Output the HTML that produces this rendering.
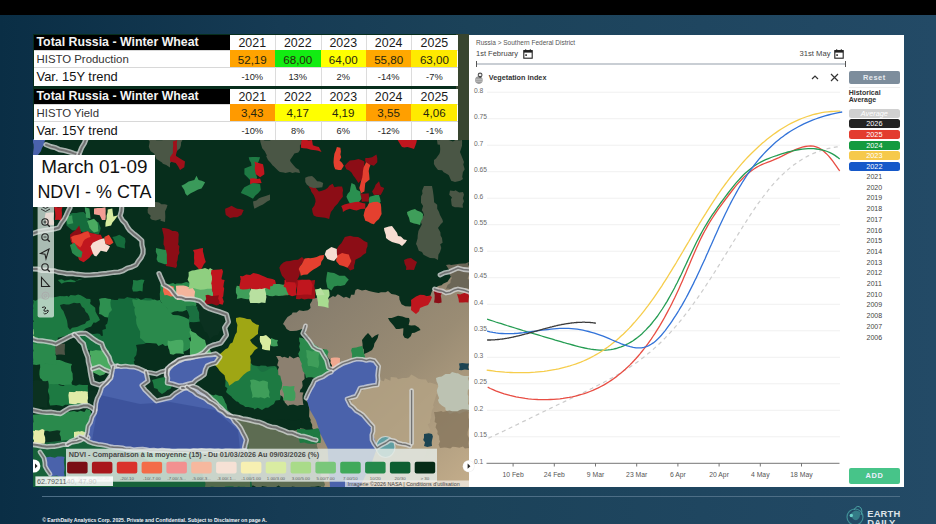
<!DOCTYPE html>
<html><head><meta charset="utf-8"><style>
html,body{margin:0;padding:0}
body{width:936px;height:524px;overflow:hidden;position:relative;background:linear-gradient(90deg,#0a2e45 0%,#163b54 30%,#1b4259 50%,#1f4660 75%,#234a66 100%);font-family:'Liberation Sans', sans-serif}
.sm{position:absolute;white-space:nowrap;font-family:'Liberation Sans', sans-serif}
.th{position:absolute;white-space:nowrap;color:#f4f4f4;font:bold 12.35px 'Liberation Sans', sans-serif}
.tl2{position:absolute;white-space:nowrap;color:#333;font:11.4px 'Liberation Sans', sans-serif}
.tl3{position:absolute;white-space:nowrap;color:#111;font:12.9px 'Liberation Sans', sans-serif}
.ty{position:absolute;text-align:center;color:#1a1a1a;font:12.4px 'Liberation Sans', sans-serif}
.tv{position:absolute;text-align:center;color:#26260e;font:11.6px 'Liberation Sans', sans-serif}
.tp{position:absolute;text-align:center;color:#1e1e1e;font:9.3px 'Liberation Sans', sans-serif}
</style></head><body>
<div style="position:absolute;left:0;top:0;width:936px;height:15px;background:#000"></div>
<svg style="position:absolute;left:33px;top:34px" width="436" height="453" viewBox="33 34 436 453">
<defs><linearGradient id="desg" gradientUnits="userSpaceOnUse" x1="300" y1="290" x2="469" y2="480"><stop offset="0" stop-color="#847b6c"/><stop offset="0.5" stop-color="#9a8c74"/><stop offset="1" stop-color="#c2ac8a"/></linearGradient></defs>
<rect x="33" y="34" width="436" height="453" fill="#072e1c"/>
<polygon points="55.9,297.2 58.3,297.6 62.6,296.2 65.2,296.4 68.6,296.8 70.6,295.0 75.2,295.6 78.1,294.5 80.7,295.3 83.8,297.0 86.5,298.7 90.3,299.1 90.7,301.2 88.5,305.3 90.0,308.0 88.2,311.1 88.3,314.4 84.2,315.1 81.9,316.9 78.8,318.2 78.7,321.0 79.2,324.8 79.8,327.2 80.7,331.5 78.2,331.6 74.6,330.9 72.2,332.2 67.2,331.2 65.2,331.9 61.6,331.5 60.0,328.8 57.2,326.8 54.0,323.9 54.1,320.7 55.7,317.9 55.4,314.1 55.9,310.5 55.0,306.7 56.5,303.7 55.2,300.6" fill="#1d7a42"/>
<polygon points="33.0,322.0 36.9,323.4 38.1,322.2 42.7,324.1 45.3,323.8 48.2,324.9 51.2,324.6 54.0,325.8 54.8,328.9 56.3,333.5 57.8,335.9 57.8,339.2 56.9,341.7 55.2,344.2 55.3,347.8 54.3,351.9 53.8,354.3 52.4,356.2 52.1,360.2 48.6,359.7 45.7,361.8 42.9,360.5 40.1,362.0 36.6,362.6 33.0,362.1 33.5,359.6 32.7,356.9 33.9,352.1 33.5,350.2 32.9,346.7 33.0,344.4 33.0,341.1 32.7,338.2 33.8,334.2 33.1,332.1 33.4,328.1 32.4,324.7" fill="#1d7a42"/>
<polygon points="33.0,328.7 36.3,328.8 40.6,328.7 40.4,333.2 40.6,337.3 37.1,336.4 33.0,337.3 32.0,333.6" fill="#d8eaa0"/>
<polygon points="57.8,280.0 61.6,283.8 64.1,282.5 67.4,282.0 69.8,282.0 74.5,282.2 77.2,280.5 79.7,280.1 82.6,280.0 78.9,279.2 75.8,280.9 74.0,280.6 70.8,279.4 66.7,280.3 64.5,280.7 61.7,279.2" fill="#1d7a42"/>
<polygon points="108.0,299.0 111.4,299.6 114.9,300.1 117.7,299.9 118.6,298.4 124.3,298.8 127.2,297.1 128.9,297.4 132.0,298.0 135.3,298.5 136.8,297.7 140.8,300.1 145.4,298.1 148.6,298.3 151.2,298.6 154.0,300.0 152.5,304.1 153.1,305.1 155.4,310.1 153.4,313.4 154.1,315.5 153.1,319.3 154.6,322.4 155.2,323.4 153.6,326.0 154.0,330.0 151.9,331.9 151.4,336.8 149.5,340.3 150.0,343.0 146.0,342.9 144.0,343.9 138.9,344.4 136.0,345.0 136.5,346.7 137.1,349.6 136.3,355.0 134.0,357.9 134.9,360.2 133.7,361.6 135.0,366.0 131.0,367.4 128.1,366.8 127.3,367.3 122.5,365.6 120.0,366.0 117.1,366.4 112.8,365.9 111.0,364.8 110.7,363.1 107.2,360.6 106.2,356.0 106.5,355.0 105.0,351.0 103.3,349.5 102.6,344.9 100.7,341.8 100.0,340.0 99.9,336.1 102.9,335.8 102.4,330.1 106.0,328.7 105.4,324.9 107.1,323.8 108.0,320.0 107.9,316.8 106.7,315.2 106.6,311.0 109.0,306.9 108.7,306.3 108.4,302.9" fill="#156c3c"/>
<polygon points="132.7,299.0 136.6,300.1 138.7,298.5 140.3,299.8 144.7,300.2 147.5,300.4 150.2,300.6 154.6,299.5 157.1,300.4 160.0,300.0 161.3,302.8 165.3,304.5 167.5,308.4 169.8,309.9 171.0,313.0 172.9,315.1 178.2,315.2 179.3,315.6 184.1,317.0 188.2,319.1 190.0,320.0 189.1,323.6 189.6,327.5 191.2,329.4 190.4,333.0 190.9,337.0 188.6,338.3 190.3,341.2 190.3,343.7 190.0,348.0 187.6,350.1 183.0,352.0 178.9,351.5 176.4,349.1 174.0,347.9 170.1,349.1 168.6,345.5 165.0,346.0 162.8,344.0 158.5,346.0 156.4,343.6 152.6,343.3 150.0,343.0 145.5,342.8 142.0,339.4 140.0,338.0 140.1,334.7 140.1,331.2 139.4,330.2 137.8,327.2 136.5,324.0 136.0,320.0 136.4,317.1 135.0,314.6 134.3,309.8 134.9,307.3 133.6,305.9 132.2,300.6" fill="#2a8a4c"/>
<polygon points="99.0,299.0 101.6,298.3 105.3,298.1 108.1,298.7 111.0,299.0 110.4,302.7 110.7,306.2 112.0,310.0 109.1,312.9 108.0,317.5 104.8,317.0 101.2,314.6 99.0,314.0 99.3,311.9 99.2,307.8 100.0,304.1 99.7,301.6" fill="#2e9050"/>
<polygon points="167.8,340.4 170.3,341.3 173.1,340.8 176.1,339.9 181.0,339.8 183.0,340.4 183.5,343.7 183.4,347.2 183.1,351.3 184.0,354.0 179.7,353.5 176.0,353.5 173.3,354.8 170.0,354.0 169.2,349.8 168.4,348.2 167.5,344.0" fill="#48aa62"/>
<polygon points="160.0,285.0 162.9,284.4 164.9,285.7 167.5,284.4 173.2,282.9 175.2,284.3 176.6,283.4 181.6,283.5 184.7,282.4 186.2,282.0 190.0,283.0 191.7,287.1 193.6,289.5 194.7,292.2 195.5,293.7 198.9,297.8 200.0,300.0 198.1,302.1 196.0,305.8 195.0,310.0 191.3,311.3 188.1,311.9 187.1,309.8 182.6,311.5 178.6,311.6 178.2,311.1 174.3,311.5 171.0,313.0 169.0,311.6 165.7,306.3 163.2,305.3 160.8,301.4 160.0,300.0 160.0,298.3 159.8,293.7 160.4,289.8 160.2,287.0" fill="#2a8a4c"/>
<polygon points="186.0,306.0 189.5,305.9 193.0,305.4 196.8,306.6 199.9,305.3 203.0,306.0 203.0,308.9 202.5,313.3 204.0,314.7 203.7,319.0 203.0,322.0 199.5,321.6 196.8,321.9 193.6,322.3 190.0,322.0 188.5,319.3 189.4,316.5 187.8,311.5 185.8,308.5" fill="#1a7040"/>
<polygon points="190.0,330.0 192.4,331.8 195.8,333.3 197.5,335.2 199.4,336.7 202.8,338.9 205.0,340.0 205.6,342.8 207.0,347.0 209.6,348.7 211.6,353.7 212.0,356.0 209.3,357.2 205.3,357.0 203.1,358.1 200.0,360.0 196.0,357.8 192.4,356.6 190.0,355.0 189.9,352.6 190.0,349.0 190.0,345.9 189.9,342.1 191.0,340.4 190.7,336.7 189.6,332.6" fill="#4aaa60"/>
<polygon points="195.0,296.0 198.3,297.0 202.0,296.6 204.0,297.7 207.9,299.3 212.0,299.5 215.0,300.0 217.3,303.1 218.7,305.5 220.9,309.2 222.9,311.8 226.0,314.0 224.3,317.6 224.1,320.2 224.3,322.6 221.9,327.6 222.0,330.0 219.6,331.2 218.2,334.9 214.0,335.8 211.7,337.6 210.0,340.0 208.6,336.3 207.1,333.1 204.3,331.6 203.1,327.8 201.9,325.0 200.0,322.0 199.1,317.8 199.2,316.4 199.1,312.6 197.2,308.7 197.3,306.1 195.5,302.0 195.4,299.3" fill="#0b3120"/>
<polygon points="40.0,364.0 42.7,363.6 46.8,363.1 49.0,361.1 52.1,360.3 56.0,360.0 59.7,360.1 62.5,361.0 65.2,362.3 69.5,363.4 72.0,364.0 71.0,366.6 71.3,370.7 72.6,373.6 72.7,376.5 72.9,379.6 71.5,382.7 72.0,385.0 68.8,385.5 65.8,384.9 62.2,384.9 59.0,384.2 56.8,385.6 54.0,385.4 50.0,385.5 46.7,385.0 43.7,383.0 42.1,379.7 40.0,378.0 39.4,374.5 39.5,370.9 40.2,367.3" fill="#2a8a4c"/>
<polygon points="33.0,343.7 35.5,344.1 39.9,344.6 42.4,343.2 46.6,344.0 49.0,344.1 52.5,344.3 56.0,343.7 55.2,346.6 56.8,350.3 55.5,354.7 56.3,356.8 56.1,361.3 56.0,364.4 52.0,364.7 48.7,364.1 45.3,363.8 43.8,364.2 40.6,364.3 36.5,365.1 33.0,364.4 33.4,360.2 33.2,357.8 32.4,353.2 33.7,350.6 32.4,347.1" fill="#2a8a4c"/>
<polygon points="46.7,385.0 50.8,384.0 53.5,384.3 57.2,384.0 60.2,385.4 63.3,386.0 65.2,384.7 69.4,384.6 71.6,384.5 76.0,385.7 79.1,384.4 82.5,385.0 84.3,384.9 88.0,385.0 87.8,387.6 88.1,391.6 88.1,396.2 88.3,398.5 88.7,403.2 88.0,405.6 84.8,406.5 80.7,404.9 77.8,406.5 75.7,406.0 71.7,405.6 69.8,404.8 65.1,404.7 62.6,406.3 59.6,405.4 56.3,405.0 54.1,405.3 50.0,405.6 48.9,401.8 49.5,398.4 49.2,395.0 47.7,391.0 48.1,389.0" fill="#1d7a42"/>
<polygon points="33.0,414.7 35.6,414.5 38.8,414.2 41.7,414.6 44.3,414.3 46.5,413.2 50.5,412.5 54.7,412.8 57.9,414.6 60.0,413.0 62.3,413.9 66.9,412.9 67.6,412.0 72.4,411.2 74.2,410.9 77.3,412.1 80.5,410.7 84.4,411.9 86.4,408.9 90.0,410.0 91.4,414.0 90.9,416.1 89.2,418.0 89.4,421.9 88.7,425.6 90.7,426.5 91.0,431.0 91.3,433.9 90.9,436.9 90.0,440.0 87.3,440.4 82.6,439.7 80.2,440.9 77.6,441.7 75.5,441.7 71.5,442.4 70.4,443.6 66.5,444.2 62.2,442.4 60.0,444.0 55.8,442.4 52.5,443.5 52.3,441.5 48.6,443.5 45.8,440.7 42.4,440.6 38.0,439.4 36.1,441.7 33.0,440.0 31.8,435.8 32.7,432.3 32.9,431.2 32.9,426.0 31.6,423.3 33.5,422.3 33.0,416.7" fill="#2a8a4c"/>
<polygon points="78.8,334.6 81.9,335.1 85.8,334.0 88.4,334.8 91.2,333.5 93.0,333.9 97.5,333.6 100.0,334.0 101.4,336.4 103.6,340.4 104.1,343.3 104.9,345.7 107.9,347.1 108.6,350.6 105.9,350.7 103.3,350.0 99.4,351.4 96.5,350.2 92.3,351.5 90.0,350.6 86.6,349.7 82.6,347.5 80.0,345.0 80.2,342.4 78.2,337.8" fill="#156c3c"/>
<polygon points="90.0,350.6 92.5,350.9 95.9,350.0 99.3,350.6 102.4,350.5 105.0,350.1 108.6,350.6 109.2,353.5 109.4,357.6 110.0,361.2 109.0,363.0 110.2,366.9 110.0,370.0 106.1,372.3 104.1,374.5 100.0,375.8 95.4,373.5 92.0,372.0 90.7,369.9 90.9,366.3 91.2,363.0 90.9,360.4 90.8,356.3 89.5,353.6" fill="#4aaa60"/>
<polygon points="56.0,343.7 59.4,344.3 62.0,343.7 65.0,343.7 64.8,348.5 64.6,350.5 65.0,355.0 61.5,354.5 58.7,354.5 56.0,355.0 55.2,350.9 55.6,347.6" fill="#4d5446"/>
<polygon points="33.0,382.7 37.2,383.1 40.4,383.5 42.8,383.0 46.7,382.7 47.5,386.7 46.8,388.6 46.5,393.5 45.9,395.4 47.6,399.0 46.1,402.0 46.7,405.6 44.1,405.3 39.7,405.9 37.0,405.6 33.0,405.6 32.2,402.5 32.1,398.2 32.4,396.2 32.6,392.9 32.3,388.5 32.0,386.4" fill="#0b3120"/>
<polygon points="40.0,430.8 42.7,431.2 47.1,430.8 49.7,431.4 54.3,430.8 57.1,430.3 60.5,430.8 59.5,434.0 60.7,436.8 61.1,440.5 60.5,444.5 56.5,443.6 54.7,445.0 51.0,444.7 45.9,444.2 43.4,443.7 40.0,444.5 40.9,440.8 39.3,438.3 39.2,435.1" fill="#0b3120"/>
<polygon points="74.0,432.0 78.8,431.3 80.8,433.0 85.7,432.0 85.7,437.6 81.2,436.8 78.2,437.3 74.0,437.6" fill="#e0eca8"/>
<polygon points="69.6,391.8 73.5,392.7 76.5,391.0 79.0,391.6 81.9,391.1 84.3,391.7 88.0,391.8 87.4,395.5 87.0,398.6 88.0,403.3 85.4,403.1 81.9,403.8 78.5,402.4 76.3,403.5 73.0,403.5 69.6,403.3 70.5,399.2 70.1,395.4" fill="#e6eca8"/>
<polygon points="33.0,430.8 37.3,431.5 40.0,431.8 44.5,430.8 43.9,434.6 43.7,438.2 43.8,441.5 44.5,444.5 41.1,445.0 36.7,445.2 33.0,444.5 34.0,440.3 33.0,438.6 33.5,434.1" fill="#e8eca8"/>
<polygon points="33.0,300.0 35.6,300.8 40.0,298.3 43.1,299.1 43.6,299.6 47.3,297.2 50.8,297.6 52.9,297.4 58.0,296.5 60.0,296.0 63.9,296.8 67.0,295.8 68.6,297.1 70.8,299.0 75.4,296.8 78.2,298.1 80.1,297.8 83.9,297.9 87.2,299.6 90.0,300.0 90.3,304.0 91.5,304.7 95.2,307.7 95.5,311.6 96.9,314.3 98.6,317.1 100.0,320.0 95.8,322.8 93.6,322.4 91.2,326.5 89.0,327.3 85.6,328.4 83.2,330.7 80.0,333.0 75.7,332.5 72.8,334.8 72.1,335.6 67.2,334.4 66.4,335.7 61.0,337.0 59.4,337.5 56.0,338.0 52.6,337.1 49.4,337.3 46.7,337.0 42.4,338.3 38.4,337.3 36.0,337.2 33.0,336.0 33.6,333.2 33.3,329.2 31.5,327.7 32.3,322.8 33.9,321.3 31.6,318.1 32.0,316.1 32.3,313.3 33.3,307.7 32.7,307.4 33.6,302.0" fill="#1d7a42"/>
<polygon points="60.0,305.0 63.8,304.1 66.1,304.5 69.1,304.6 73.9,302.8 77.0,303.3 80.0,303.0 81.9,306.7 84.3,308.5 85.7,312.1 87.6,313.4 89.2,316.6 90.0,320.0 86.4,321.6 85.0,323.8 81.2,324.9 77.6,326.7 75.3,327.2 72.1,327.7 70.0,330.0 67.8,327.1 67.6,324.4 67.0,320.5 65.7,316.9 64.5,313.9 63.4,311.0 61.1,308.2" fill="#0b3120"/>
<polygon points="133.0,280.0 137.1,280.4 141.5,279.4 144.5,280.0 142.9,284.5 142.8,287.4 142.5,291.5 140.0,290.8 137.0,291.4 133.0,291.5 132.1,288.5 133.1,283.0" fill="#1d7a42"/>
<polygon points="163.5,285.7 166.3,285.3 170.7,285.7 174.0,286.7 173.3,289.8 173.9,292.5 174.0,296.2 170.6,296.6 166.9,295.0 164.5,295.3 163.2,291.6 163.0,289.9" fill="#f06a4c"/>
<polygon points="175.9,285.7 179.4,285.6 183.3,285.6 186.0,285.9 189.1,287.3 191.8,286.4 196.0,286.7 195.4,289.5 197.0,292.5 196.2,295.8 196.0,299.1 193.3,299.1 189.0,299.3 186.3,300.1 183.4,299.1 180.4,299.5 176.9,300.0 176.7,295.9 176.2,293.5 176.2,289.8" fill="#f4b59c"/>
<polygon points="192.2,280.0 195.7,279.6 198.2,280.3 202.1,279.5 205.9,280.3 210.6,279.9 213.2,280.0 214.1,284.3 212.6,285.7 212.5,290.5 213.4,293.9 214.1,296.7 213.2,298.8 213.2,302.9 208.8,303.1 206.6,302.7 203.0,302.1 199.7,302.2 196.0,301.0 194.7,298.0 194.5,295.7 195.1,291.5 193.0,288.5 192.9,286.5 192.5,283.5" fill="#5ab06a"/>
<polygon points="211.2,280.0 213.6,279.2 217.7,280.4 220.5,279.2 224.6,280.0 223.8,283.6 223.4,286.7 224.2,288.6 223.7,292.3 223.2,296.5 222.4,297.6 223.8,301.5 222.7,304.8 218.9,303.8 216.1,304.4 213.2,302.9 212.3,299.1 212.8,296.5 213.2,293.8 211.8,289.2 212.5,287.5 210.6,283.7" fill="#c0161e"/>
<polygon points="205.5,295.3 208.0,294.7 211.8,296.1 215.5,295.7 218.9,295.3 218.1,298.5 219.6,301.7 218.9,304.8 216.4,305.6 211.9,303.8 209.4,304.1 205.5,304.8 204.5,302.1 206.2,299.1" fill="#8c0d16"/>
<polygon points="240.6,280.0 244.6,280.3 248.9,279.6 252.1,280.0 252.1,285.7 248.6,286.5 245.3,285.1 240.6,285.7" fill="#c0161e"/>
<polygon points="261.6,280.0 265.0,280.2 269.0,280.8 272.4,279.7 275.0,280.0 275.9,283.7 275.0,287.6 271.3,286.8 268.3,286.9 264.5,287.9 261.6,287.6 262.2,284.3" fill="#c0161e"/>
<polygon points="236.8,285.7 240.3,286.2 244.0,286.5 246.4,286.7 250.2,285.7 250.3,289.6 250.7,293.3 249.7,295.5 250.2,299.1 247.3,299.3 244.0,298.8 241.1,298.1 236.8,299.1 237.3,295.5 235.9,292.8 235.9,288.5" fill="#3f9e5a"/>
<polygon points="257.8,283.8 260.5,284.8 264.8,284.7 267.5,284.6 269.0,284.1 272.6,284.3 276.0,283.9 279.3,284.0 282.9,284.8 285.0,284.4 288.3,283.8 289.1,287.4 287.6,291.4 288.3,295.3 285.8,295.3 281.6,295.7 278.8,296.0 275.5,295.5 272.8,296.2 269.3,296.0 266.8,295.0 263.3,295.3 261.7,296.3 257.8,295.3 258.7,291.7 257.3,287.6" fill="#3f9e5a"/>
<polygon points="250.2,280.0 253.6,279.2 256.5,280.7 260.0,280.0 262.7,279.7 265.4,280.0 265.5,282.5 265.8,286.7 265.0,289.6 265.9,293.0 266.4,297.3 266.1,298.8 265.4,302.9 261.5,302.5 259.1,303.3 256.9,303.0 253.5,303.0 250.2,302.9 249.2,299.7 249.6,296.2 249.2,293.4 251.0,289.0 250.3,285.6 249.9,282.6" fill="#b8e0a0"/>
<polygon points="284.5,280.0 288.6,279.9 292.6,279.1 296.0,280.0 296.4,282.8 296.2,285.4 295.7,288.7 295.6,292.7 296.0,295.3 292.1,296.2 288.5,294.7 284.5,295.3 284.8,292.3 283.8,289.2 283.6,285.9 284.6,283.4" fill="#c8141e"/>
<polygon points="296.0,280.0 298.6,279.8 301.7,279.8 305.6,280.3 308.2,279.7 311.2,280.6 315.1,280.0 314.6,283.9 314.2,285.4 314.9,289.4 315.6,293.5 315.1,295.5 315.1,299.1 312.3,299.0 308.2,298.7 304.5,299.5 301.4,298.5 299.4,299.3 296.0,299.1 296.2,296.2 296.6,293.6 296.9,289.3 295.7,285.6 295.8,282.5" fill="#a01018"/>
<polygon points="248.3,365.9 251.5,366.6 254.0,365.4 259.2,366.2 260.9,365.6 265.7,365.8 267.4,366.7 270.9,366.2 275.0,365.9 275.2,369.3 275.9,372.3 275.2,375.7 275.0,380.0 272.6,379.3 268.3,380.7 265.7,379.2 262.4,380.7 257.9,380.5 254.4,379.3 250.9,379.6 248.3,380.0 248.9,376.4 249.2,373.7 247.7,369.3" fill="#1a7040"/>
<polygon points="226.0,356.0 228.8,355.9 231.3,358.6 235.7,358.6 238.8,358.3 242.5,359.6 245.0,360.0 248.7,362.5 251.7,363.8 252.5,364.9 257.0,367.0 259.6,370.4 262.0,372.0 263.5,371.7 266.2,370.7 271.4,367.5 273.9,367.9 276.0,366.0 277.1,369.0 279.4,372.2 283.3,374.9 285.0,376.0 283.0,378.5 284.1,382.3 282.2,386.2 283.5,387.4 280.8,391.5 281.0,394.5 280.6,396.7 280.0,400.0 275.6,400.6 273.9,404.0 270.8,405.7 268.1,407.8 265.5,407.8 262.0,410.0 257.8,407.8 254.3,409.4 253.7,408.2 248.3,407.1 245.2,406.9 243.6,405.6 240.0,404.0 238.0,401.8 236.4,401.4 232.2,397.8 231.4,396.5 228.1,393.9 226.0,392.0 227.4,388.3 225.1,386.6 225.3,384.2 225.5,381.3 225.6,378.2 226.8,374.7 225.1,370.0 224.6,367.0 226.5,363.7 225.2,362.2 225.0,358.5" fill="#1d7a42"/>
<polygon points="250.0,380.0 253.3,379.4 255.6,380.1 259.5,381.4 262.8,380.5 264.8,380.7 268.0,382.0 267.8,385.2 267.9,387.8 269.5,391.7 269.0,395.0 270.0,398.0 267.6,397.0 264.6,398.4 260.7,397.3 258.9,397.7 254.2,397.2 252.0,398.0 252.4,395.2 251.9,392.5 251.1,389.9 250.4,386.1 251.0,383.2" fill="#3f9e5a"/>
<polygon points="185.0,392.0 187.2,392.7 190.5,392.6 194.6,393.6 197.2,393.3 199.5,393.5 203.2,394.7 206.7,394.8 209.5,394.0 213.5,395.6 215.6,394.5 218.9,395.7 222.0,396.0 224.1,399.4 225.2,402.6 226.6,404.7 227.5,409.7 230.0,412.0 227.3,410.6 224.1,410.0 219.2,409.7 216.8,408.9 213.7,406.2 210.0,406.0 207.2,405.2 204.8,403.0 201.1,402.4 197.3,401.4 195.6,398.4 192.0,398.0 189.8,395.7 186.7,394.2" fill="#2a8a4c"/>
<polygon points="283.0,324.0 285.0,320.6 287.5,317.0 291.6,314.5 292.7,312.6 296.6,312.5 299.2,310.3 303.2,311.0 308.0,310.2 310.6,307.9 309.9,304.2 312.0,301.1 312.6,298.7 314.8,298.6 319.5,296.4 322.9,296.0 324.3,296.7 328.6,298.7 333.0,296.0 335.1,297.1 337.8,294.2 339.5,295.0 343.8,297.7 346.0,296.8 350.0,298.6 351.1,294.8 354.3,294.8 355.5,290.0 357.6,289.0 362.0,290.4 365.7,289.8 369.0,291.0 373.2,292.1 375.7,292.5 378.6,293.0 380.9,292.2 385.7,292.2 388.0,291.0 391.4,293.9 395.8,294.8 399.2,296.3 399.5,299.7 401.5,304.2 405.3,306.3 409.6,306.4 413.0,306.3 417.0,303.3 417.2,300.0 420.6,298.6 423.3,299.0 427.2,296.0 430.0,296.7 431.8,291.5 434.0,289.0 438.2,286.0 441.6,285.3 443.1,283.8 447.5,281.8 449.0,279.5 450.4,277.6 452.3,273.3 454.3,272.9 457.0,270.0 460.4,268.3 464.0,269.4 465.3,269.0 468.3,265.5 472.0,266.0 472.0,270.1 472.3,272.2 472.0,274.4 471.4,277.8 472.1,282.5 470.7,283.4 473.3,287.7 470.7,290.0 472.5,294.5 470.8,297.5 472.8,298.6 472.1,303.3 471.2,306.0 472.2,307.1 471.3,311.1 470.9,315.8 471.3,316.7 472.3,320.6 471.5,323.0 472.0,327.8 470.7,330.8 473.3,333.1 472.9,335.3 473.4,339.4 472.6,341.5 471.2,345.3 472.7,346.2 471.4,350.9 471.1,352.7 471.1,355.4 470.9,359.5 472.0,363.3 471.4,364.8 473.3,369.3 472.5,372.5 471.5,375.3 471.5,378.5 473.0,379.6 472.9,382.9 470.5,385.8 472.2,391.2 473.3,392.1 471.8,397.5 473.2,400.2 471.2,401.5 470.9,404.5 471.7,409.2 472.5,410.3 471.0,414.2 473.2,417.3 472.9,420.9 473.1,423.4 471.6,426.3 472.9,428.8 471.1,433.5 471.9,435.9 471.0,437.2 471.2,441.4 470.6,443.9 473.3,447.4 470.5,451.6 471.4,452.7 472.4,457.2 471.5,460.4 473.1,462.3 472.0,464.3 472.3,468.2 472.5,472.6 471.5,475.4 473.3,476.9 472.9,480.9 473.3,482.7 471.6,486.0 472.0,490.0 468.3,491.2 466.1,489.6 464.4,488.7 458.6,490.8 457.2,491.0 454.0,491.3 450.5,489.2 449.2,490.1 443.6,488.5 440.5,490.7 439.4,488.8 436.9,490.8 433.4,490.2 429.8,490.6 426.7,491.3 424.3,490.5 422.3,491.4 418.1,488.8 415.1,491.3 411.1,489.3 408.3,489.2 406.9,490.1 401.8,490.0 400.6,488.6 396.1,488.5 394.6,489.7 389.5,489.2 387.1,490.2 384.8,489.8 381.5,488.6 378.5,490.4 376.1,490.3 372.0,488.6 370.8,490.6 367.5,491.4 363.4,490.7 360.4,490.3 359.2,489.9 355.3,491.5 352.0,489.2 350.4,490.5 345.5,489.3 341.6,488.8 341.4,490.2 337.8,489.2 335.0,490.6 332.1,490.0 329.3,490.2 323.9,491.2 322.0,490.0 321.0,488.1 321.4,483.5 320.9,480.2 319.2,476.1 318.9,475.6 319.3,469.8 319.1,468.5 319.4,466.2 318.2,463.2 316.8,457.7 317.8,456.1 317.3,453.4 317.3,447.9 316.4,446.7 315.6,442.2 316.0,440.0 315.7,436.9 316.0,435.4 313.3,429.6 312.2,427.8 312.2,424.8 310.5,421.4 310.7,419.8 309.1,416.4 309.2,413.8 309.4,409.1 308.8,406.6 308.4,402.6 306.2,401.1 306.0,398.0 306.8,394.8 309.1,391.4 311.3,388.7 312.2,387.8 311.9,384.6 314.5,380.6 316.4,379.0 319.0,379.0 322.4,376.3 327.2,373.8 327.4,374.0 331.5,372.0 332.3,368.6 335.0,365.9 337.4,363.8 340.0,362.8 338.4,361.7 332.9,361.2 330.7,360.5 328.6,358.2 325.7,354.0 325.1,353.0 324.0,349.0 321.5,349.7 315.5,347.2 312.6,346.8 311.4,344.3 308.0,340.0 308.2,335.9 304.4,334.0 305.7,331.9 303.5,328.5 299.9,329.7 296.6,330.8 292.7,331.1 290.0,331.0 286.6,328.9 284.8,325.8" fill="url(#desg)"/>
<polygon points="350.0,398.0 351.8,396.3 353.8,394.1 356.5,391.1 360.0,389.9 362.9,390.8 364.5,388.7 367.6,387.7 372.8,383.8 375.9,384.1 375.6,381.3 380.0,380.0 383.9,381.3 384.9,378.3 390.4,380.8 390.7,376.9 396.5,377.4 398.1,379.3 402.6,378.1 406.2,378.0 409.1,377.3 411.3,374.6 414.0,376.0 418.5,378.8 419.2,378.7 420.7,379.3 426.0,379.6 428.1,382.9 429.9,382.5 432.6,383.3 438.6,385.3 440.0,386.0 437.2,390.5 438.8,392.3 436.4,394.5 435.1,398.9 433.7,403.2 433.0,405.0 433.9,407.1 431.8,410.5 431.1,415.7 431.5,417.0 430.0,420.0 430.2,423.0 427.7,424.2 430.5,430.5 426.6,432.6 428.9,436.8 425.5,436.8 426.4,441.7 424.7,445.1 426.9,447.2 426.9,450.0 426.3,453.0 424.2,456.1 424.9,461.1 421.9,463.0 424.5,466.4 421.7,468.2 423.8,470.6 423.6,474.4 421.4,478.7 421.6,481.3 421.9,484.5 420.0,487.0 418.6,487.6 414.2,485.2 412.4,485.9 406.6,485.2 405.2,486.5 402.2,488.3 400.3,488.2 396.8,486.5 390.6,488.1 391.3,486.9 387.9,487.3 382.7,488.3 378.4,486.5 377.9,485.3 374.0,487.0 373.3,483.6 371.1,480.8 372.3,478.9 370.9,476.4 369.3,472.6 367.1,470.0 368.5,466.9 368.2,465.4 367.0,462.5 365.9,456.7 365.8,455.4 364.0,450.3 362.9,448.2 362.1,447.6 360.4,441.0 360.0,440.0 357.8,437.2 359.9,432.2 357.5,430.4 356.9,428.5 356.4,424.1 357.2,423.2 356.6,417.5 354.4,414.9 352.0,414.7 353.5,409.8 353.2,408.4 351.3,402.4 352.3,401.0" fill="#b5a486" opacity="0.75"/>
<polygon points="276.0,356.0 280.2,355.9 282.3,357.6 284.2,356.8 288.3,358.3 289.6,356.0 293.5,358.5 298.0,356.7 300.0,358.0 302.7,361.1 304.3,365.3 303.1,368.4 305.8,370.0 305.1,372.0 304.4,374.7 304.6,379.1 302.1,381.2 302.7,385.8 302.0,388.0 300.3,389.8 299.6,392.7 298.5,398.1 298.0,400.0 293.7,401.4 292.2,403.1 288.0,406.0 284.8,402.5 284.3,401.1 282.5,396.4 280.0,395.0 280.0,390.8 281.5,388.6 282.0,386.0 282.2,383.2 281.0,379.0 280.3,375.7 278.4,375.1 278.0,369.5 279.0,367.1 277.2,365.2 278.5,360.6 277.0,357.6" fill="#8c8070"/>
<polygon points="289.7,392.5 292.9,392.4 296.5,392.2 300.1,392.3 303.5,392.5 302.6,395.5 302.5,398.0 303.0,402.8 303.5,405.0 300.0,405.1 297.4,405.8 293.3,404.5 289.7,405.0 289.7,401.6 290.6,397.8 289.4,396.0" fill="#8c8070"/>
<polygon points="299.0,337.6 302.3,338.0 306.0,340.0 309.9,341.1 312.6,342.5 315.0,345.0 319.1,347.5 319.3,348.2 322.3,349.2 326.9,349.6 328.6,352.0 327.7,353.8 327.1,358.1 327.4,360.1 328.9,363.6 327.7,366.8 329.2,369.7 328.5,374.7 328.0,376.5 325.1,376.1 320.6,377.4 317.6,376.8 316.4,378.2 311.6,377.2 308.5,377.2 306.0,378.0 305.0,373.8 302.8,370.9 302.5,369.1 301.5,365.8 301.8,363.8 300.0,360.0 299.6,358.0 298.2,353.8 300.1,350.1 299.2,346.5 300.1,343.1 299.3,341.4" fill="#2a8a4c"/>
<polygon points="306.0,350.0 308.6,350.3 312.2,351.5 316.5,350.6 320.0,352.0 318.7,355.7 318.5,358.9 319.1,361.6 319.1,365.0 318.0,368.0 314.8,367.1 310.8,365.9 308.0,366.0 307.4,362.6 307.7,359.1 306.6,357.3 306.6,353.5" fill="#3f9e5a"/>
<polygon points="331.0,358.0 334.0,357.5 337.3,357.5 340.0,358.0 339.9,362.8 339.2,365.4 340.0,369.7 337.4,368.9 333.3,370.4 331.0,369.7 332.0,365.4 330.4,362.8" fill="#f0a890"/>
<polygon points="283.0,386.0 286.3,386.0 290.0,386.6 294.5,386.0 294.0,389.8 295.4,393.1 295.4,397.4 294.5,400.6 290.8,400.9 287.0,400.3 283.0,400.6 284.0,396.8 284.0,394.0 282.1,389.2" fill="#3f9e5a"/>
<polygon points="315.0,289.6 319.4,288.7 322.3,289.6 326.1,289.4 328.6,289.6 329.4,292.0 329.6,295.6 328.0,298.5 328.9,300.9 328.4,304.0 328.6,308.0 324.2,306.7 321.0,306.2 318.0,306.0 318.0,302.6 317.5,300.2 317.0,297.1 315.8,293.2" fill="#a8dc90"/>
<polygon points="388.0,318.0 391.6,318.0 394.6,317.0 398.0,315.8 402.5,316.6 405.8,317.7 409.0,318.0 409.7,320.7 408.3,326.3 409.0,329.0 406.2,328.5 403.0,328.3 399.0,328.9 396.0,329.0 393.5,325.5 392.0,323.8 389.6,321.1" fill="#072e1c"/>
<polygon points="403.4,326.0 408.1,325.0 411.2,325.5 415.0,325.3 418.7,327.4 420.6,330.0 417.6,331.2 414.6,332.8 412.0,333.0 410.8,336.3 408.0,338.7 404.6,337.8 403.0,335.0 403.2,332.2 403.4,329.0" fill="#072e1c"/>
<polygon points="362.0,340.0 363.2,338.6 365.3,335.8 368.0,333.0 370.7,336.0 372.0,338.0 374.9,335.7 378.6,334.0 377.7,338.1 376.3,340.5 374.4,343.4 373.8,346.7 372.0,350.0 368.1,352.3 364.0,354.0 363.8,349.6 362.5,347.4 362.6,344.2" fill="#072e1c"/>
<polygon points="352.0,348.0 356.3,347.5 358.6,346.7 362.0,346.0 363.4,349.9 363.5,351.4 364.2,354.0 365.3,357.8 362.3,358.8 358.1,358.3 354.7,358.7 352.0,357.8 352.1,354.3 351.1,350.6" fill="#2a8a4c"/>
<polygon points="411.0,300.0 413.1,298.4 416.0,296.6 420.0,294.8 424.0,294.9 426.9,296.2 429.8,295.5 432.0,297.0 430.5,301.0 428.0,305.0 424.2,306.3 420.0,308.0 419.0,311.3 416.0,314.0 414.0,312.4 411.0,310.0 411.1,307.3 411.2,303.5" fill="#c0161e"/>
<polygon points="434.0,289.0 438.0,288.4 441.6,289.0 441.9,293.2 440.7,295.6 441.3,298.6 441.6,302.4 438.6,303.3 434.0,302.4 434.6,298.9 434.7,294.9 434.0,292.3" fill="#8c0d16"/>
<polygon points="457.0,294.0 460.2,294.5 465.4,292.4 468.3,293.0 469.0,296.6 468.7,298.3 468.3,302.4 465.9,302.2 462.7,302.5 459.0,302.4 458.5,298.7" fill="#b0141a"/>
<polygon points="436.0,378.0 438.6,377.0 441.7,376.5 445.5,373.9 450.0,374.1 452.0,372.0 456.5,373.3 457.9,373.3 461.4,375.3 464.1,376.1 469.0,376.0 468.0,378.4 469.4,382.5 469.0,385.2 469.3,388.3 467.8,390.4 467.6,394.2 468.4,396.2 468.3,401.3 467.9,404.2 470.2,405.1 470.0,408.1 469.0,412.0 466.3,411.2 462.1,412.6 459.1,414.0 456.8,411.9 453.3,412.4 450.0,414.0 447.0,411.3 445.4,409.5 445.4,407.8 442.1,405.7 439.0,403.0 438.0,400.0 439.1,398.2 437.5,394.0 436.8,390.4 438.3,386.3 437.6,383.5 436.5,381.3" fill="#bcc2b2"/>
<polygon points="434.0,412.0 437.2,412.0 441.3,411.1 443.0,412.0 446.7,410.9 449.6,410.6 452.1,411.3 457.5,411.3 459.9,410.1 462.4,409.3 466.5,409.6 469.0,410.0 468.4,414.6 468.5,417.8 469.4,420.3 469.4,421.7 469.6,425.1 468.7,427.9 467.7,431.8 467.5,435.0 470.1,440.0 468.8,440.5 468.5,443.5 469.0,448.0 464.9,448.4 462.9,446.6 459.3,447.8 455.8,446.9 452.6,446.8 450.2,448.4 446.8,447.7 444.6,447.6 440.0,448.0 438.6,444.6 440.2,441.0 439.3,440.3 439.1,435.9 437.4,434.1 437.6,430.9 435.5,427.3 436.7,423.2 434.6,422.0 435.2,417.7 434.5,414.3" fill="#86765c" opacity="0.8"/>
<polygon points="424.0,434.0 428.9,433.3 432.0,434.0 432.9,436.5 431.9,440.8 431.7,443.0 432.0,446.0 427.3,446.9 424.0,446.0 425.0,442.3 423.2,439.9 424.0,437.6" fill="#1c4452"/>
<polygon points="459.0,363.5 462.2,363.1 466.5,363.5 469.0,363.5 468.2,367.2 469.0,370.0 464.8,369.4 461.5,370.3 459.0,370.0 459.7,367.0" fill="#1c4452"/>
<polygon points="224.0,412.0 226.9,413.2 229.7,415.0 231.6,416.0 236.6,416.3 239.9,415.4 243.0,417.6 245.0,418.0 246.8,420.1 250.5,420.7 252.3,421.5 254.8,420.7 258.0,421.6 262.0,424.0 265.4,423.5 267.4,425.6 272.3,424.7 273.8,426.1 278.0,425.2 280.4,425.6 284.1,425.4 285.8,426.6 289.6,425.7 293.0,427.9 297.8,426.3 300.0,428.0 304.1,428.8 307.5,432.0 309.0,432.6 313.0,432.8 316.0,435.0 317.9,438.5 318.3,440.1 316.7,445.4 317.3,446.9 317.7,451.3 318.2,452.2 318.1,457.7 318.4,458.5 319.7,462.7 321.7,467.0 321.1,469.2 321.1,471.8 320.7,475.5 322.7,478.3 324.1,481.9 325.0,484.6 324.0,487.0 319.8,486.5 318.3,485.9 314.6,486.7 310.7,486.8 309.3,488.3 306.2,487.3 301.7,488.5 300.5,487.6 296.6,487.2 292.3,486.4 289.1,488.5 287.1,487.5 285.2,486.9 282.9,488.4 278.4,485.6 276.2,487.0 270.9,487.7 269.6,488.4 266.5,486.7 262.0,486.0 260.9,488.0 256.7,487.2 253.2,485.5 250.2,485.9 248.0,487.0 248.9,482.7 247.0,480.6 249.0,477.1 247.1,475.5 247.5,472.9 247.6,467.9 248.6,465.8 247.3,463.4 246.8,458.4 246.4,455.5 248.0,454.1 246.1,448.7 247.0,447.0 244.3,442.8 243.7,441.1 242.1,437.9 240.4,437.0 237.5,435.0 235.7,432.3 236.1,429.4 232.6,426.4 232.4,422.3 230.1,419.6 226.8,418.6 226.4,415.5" fill="#5d6c52"/>
<polygon points="264.0,420.0 267.0,419.6 271.0,419.9 273.5,420.1 276.2,420.3 280.5,419.1 283.0,419.5 286.3,420.2 288.2,419.2 292.3,420.7 296.0,420.6 297.8,419.7 301.7,420.0 301.3,423.1 300.0,427.5 300.0,430.0 297.3,429.8 294.0,430.4 291.5,430.6 287.7,430.9 285.5,429.5 281.3,429.9 278.5,430.8 276.0,430.0 272.6,428.6 270.5,426.6 268.7,423.3 267.4,421.8" fill="#072e1c"/>
<polygon points="297.0,429.0 299.5,428.9 303.2,428.9 306.6,429.7 310.5,429.5 314.6,429.0 317.1,428.3 320.5,429.0 321.1,431.6 320.2,435.3 321.0,439.4 320.5,443.0 317.1,443.1 314.4,444.0 310.0,443.8 307.3,443.4 304.4,442.4 300.0,443.0 298.9,439.5 298.1,435.6 297.1,433.3" fill="#1d7a42"/>
<polygon points="456.0,34.0 469.0,34.0 469.0,140.0 456.0,140.0" fill="#38452f"/>
<polygon points="33.0,139.0 36.7,139.9 40.0,139.8 42.0,139.2 46.0,139.0 44.5,141.5 44.1,144.7 42.0,148.0 40.9,151.2 38.0,155.0 33.0,155.0 33.1,152.3 33.6,147.7 33.5,144.6 32.7,141.4" fill="#4a62ab"/>
<polygon points="147.5,139.0 151.3,137.7 152.9,139.3 156.6,140.3 161.3,140.2 163.4,140.1 167.1,140.1 169.5,139.2 173.1,138.7 176.2,138.7 178.6,137.9 183.0,139.0 181.1,142.4 181.0,145.3 180.0,148.3 178.0,150.0 175.4,152.6 175.7,154.5 175.2,159.5 172.3,160.3 170.0,163.2 170.0,167.6 166.2,164.9 162.9,163.7 162.0,162.5 158.0,160.0 156.4,158.9 154.1,153.5 150.7,151.3 150.0,150.0 148.8,146.8 149.7,141.6" fill="#4a5645"/>
<polygon points="147.5,202.0 152.1,201.8 154.0,201.8 159.1,202.4 161.4,204.3 164.9,204.2 167.5,205.0 166.6,208.1 165.1,211.2 165.3,216.1 165.3,217.3 165.0,222.0 160.5,220.7 160.6,218.9 155.8,220.5 151.8,219.8 150.0,218.0 150.7,215.8 147.8,213.0 147.6,209.4 149.0,205.3" fill="#4a5645"/>
<polygon points="260.0,139.0 262.5,139.4 264.6,140.5 270.2,140.6 271.5,138.0 273.9,138.0 276.9,139.6 281.1,140.0 285.4,138.5 286.6,138.5 289.2,139.5 292.8,137.9 298.1,138.8 301.4,140.5 303.0,139.0 302.5,141.9 299.9,145.5 300.0,150.0 298.3,152.5 294.4,153.5 292.0,157.2 290.0,160.0 290.6,161.8 293.3,164.9 296.0,168.0 299.1,169.7 300.0,173.0 295.4,172.2 292.4,172.9 289.9,171.9 285.4,173.1 283.7,172.6 280.0,172.0 278.2,170.7 273.7,166.2 272.7,165.4 270.4,162.4 268.0,160.0 266.2,156.2 266.9,155.5 264.6,150.9 262.2,148.3 261.4,145.4 260.4,141.9" fill="#4a5645"/>
<polygon points="437.0,140.0 438.8,140.3 444.8,139.5 446.5,139.6 450.3,140.6 452.9,141.5 456.4,139.5 458.5,140.4 462.0,140.0 462.1,142.1 462.0,145.8 461.4,147.7 460.0,152.0 460.7,153.8 462.4,157.9 464.0,162.0 463.3,164.5 464.7,169.2 462.9,172.2 462.2,177.0 463.0,179.0 460.3,180.7 455.0,182.0 451.2,180.8 448.8,175.2 447.0,174.0 443.7,172.3 442.1,170.2 438.0,170.0 435.3,166.5 433.9,163.9 434.0,160.0 436.0,158.5 439.4,153.8 440.0,152.0 440.2,149.0 439.9,144.7 437.6,144.5" fill="#4a5645"/>
<polygon points="424.0,186.0 427.4,186.0 432.0,186.0 432.7,189.4 433.2,193.0 433.6,195.7 434.0,200.0 434.1,202.3 437.2,204.7 437.2,208.8 438.9,211.8 440.0,215.0 442.5,219.7 443.0,222.0 440.7,224.2 438.0,228.0 440.4,232.3 440.6,235.5 442.0,238.0 442.6,242.8 440.2,244.2 441.3,247.9 440.0,252.0 438.4,254.7 438.0,260.0 434.7,258.3 430.0,258.0 426.4,256.3 423.5,254.8 422.0,252.0 418.8,250.7 417.0,245.7 416.0,244.0 416.7,241.5 417.6,238.2 417.7,235.4 418.4,230.9 420.0,228.0 421.8,224.4 420.8,222.1 421.9,218.0 424.0,215.0 423.0,212.0 421.8,210.2 423.1,206.1 421.0,202.7 421.0,200.0 421.1,196.2 422.5,193.7 422.1,190.7" fill="#4a5645"/>
<polygon points="450.0,190.5 454.1,190.9 455.6,190.3 459.3,192.5 463.0,192.0 464.0,194.8 462.9,198.2 464.0,201.3 462.6,204.6 463.0,207.7 458.1,207.2 454.8,207.3 452.0,206.0 451.5,204.0 451.0,199.2 452.0,197.6 449.2,194.8" fill="#4a5645"/>
<polygon points="446.0,265.0 449.1,264.4 451.2,264.9 456.4,264.2 459.1,263.8 463.6,263.4 465.3,263.6 469.0,262.0 468.5,263.8 468.3,268.0 470.1,270.5 469.5,273.3 467.6,278.4 469.2,279.9 469.5,281.9 470.1,285.4 469.0,289.0 467.1,288.0 462.3,288.4 459.5,287.7 454.5,288.5 451.2,289.9 448.1,288.4 446.0,289.0 447.6,285.1 450.4,282.9 450.7,279.9 452.0,278.0 449.7,275.1 449.6,272.4 448.9,269.5" fill="#6b6656"/>
<polygon points="54.0,206.0 57.9,207.4 62.4,207.0 61.7,210.1 62.0,213.5 61.7,218.2 62.0,221.0 58.5,219.7 55.0,220.0 55.4,216.0 55.1,212.1 54.6,209.7" fill="#c0161e"/>
<polygon points="45.6,213.0 50.4,212.5 54.0,212.6 53.5,216.3 53.2,218.8 54.1,222.1 54.0,225.0 49.3,224.8 46.0,224.0 45.9,221.0 44.8,217.6" fill="#f39d94"/>
<polygon points="66.5,216.5 69.7,214.3 72.2,213.0 76.5,212.9 79.5,212.2 83.6,211.9 87.1,215.3 87.7,217.8 89.4,221.0 92.6,221.7 95.1,222.0 98.5,222.2 99.5,225.1 100.8,227.9 100.1,231.0 98.5,234.8 95.1,233.9 93.0,233.1 89.4,232.5 86.7,231.7 83.6,232.2 80.2,231.3 76.0,230.4 72.2,230.2 68.8,227.5 66.5,225.6 66.2,222.7 66.9,219.2" fill="#156c3c"/>
<polygon points="65.3,217.6 68.4,216.3 72.2,215.3 72.4,219.1 73.3,223.3 67.6,224.5 66.6,220.7" fill="#3a9a5a"/>
<polygon points="87.1,221.0 90.3,219.9 94.0,218.7 97.4,222.2 98.0,225.7 98.0,228.3 98.5,231.3 94.0,232.5 91.5,230.3 89.4,227.9 88.6,225.0" fill="#4aaa60"/>
<polygon points="84.8,207.3 89.4,208.4 89.8,211.8 90.2,215.2 90.5,218.7 85.9,217.6 85.9,213.8 85.1,211.0" fill="#3a9a5a"/>
<polygon points="94.0,208.4 97.4,208.0 101.6,208.1 105.4,207.3 105.7,210.7 105.6,213.2 105.8,216.7 105.4,219.9 102.0,219.9 99.7,215.3 94.0,214.2" fill="#f39d94"/>
<polygon points="107.7,209.6 112.3,208.4 112.8,212.8 113.4,216.5 118.0,215.3 114.6,219.9 112.4,222.6 111.1,225.6 105.4,226.8 105.5,222.9 106.6,218.7 106.6,215.5 107.6,212.2" fill="#d8eca0"/>
<polygon points="112.3,237.1 115.9,236.3 119.2,234.8 121.6,236.0 125.0,238.2 125.5,241.5 124.7,245.1 125.0,248.5 121.0,247.6 116.9,246.2 115.4,243.2 114.1,239.9" fill="#156c3c"/>
<polygon points="69.9,237.1 73.5,235.5 77.9,233.6 80.5,233.4 83.7,232.1 87.1,231.3 90.8,233.0 94.0,233.6 97.5,234.4 100.8,234.8 103.1,239.4 100.3,242.1 97.4,244.0 95.9,247.2 95.2,250.0 94.0,253.1 91.6,254.8 89.4,257.7 86.6,259.9 83.6,262.3 79.1,260.0 78.1,256.9 77.3,254.1 75.6,250.8 74.1,247.1 72.2,244.0 70.9,241.0" fill="#c0161e"/>
<polygon points="69.9,234.8 73.0,232.0 75.6,230.2 79.1,225.6 80.5,229.4 81.3,233.6 79.7,236.3 79.1,239.9 77.9,242.8 74.8,242.0 71.0,240.5" fill="#8c0d16"/>
<polygon points="71.0,237.1 74.1,235.6 77.9,234.8 81.7,233.7 84.6,232.3 88.2,231.3 89.4,234.0 90.5,237.1 87.9,237.8 84.8,239.4 83.1,241.8 82.0,245.1 80.2,247.4 75.6,244.0 72.2,241.7" fill="#e4402f"/>
<polygon points="104.3,237.1 108.8,234.8 110.3,237.1 112.3,240.3 113.4,242.8 110.0,245.1 105.4,244.0 104.9,240.7" fill="#e4402f"/>
<polygon points="92.8,242.8 95.8,241.2 99.7,239.4 104.3,238.2 105.4,244.0 110.0,246.2 108.8,248.7 106.6,252.0 100.8,250.8 98.9,253.3 96.2,256.6 94.0,255.4 92.7,252.7 91.5,249.5 90.5,246.2" fill="#f6ddd2"/>
<polygon points="69.9,245.1 74.5,242.8 75.9,245.3 77.9,248.5 82.5,252.0 81.3,257.7 76.8,256.6 72.2,253.1 71.2,249.2" fill="#2a8a4c"/>
<polygon points="162.0,228.0 164.4,228.1 168.8,228.9 172.5,231.1 175.3,231.1 178.0,232.0 178.8,234.5 178.5,237.7 178.5,241.9 178.1,244.5 179.4,246.2 179.0,250.0 179.5,252.9 178.1,255.6 177.6,259.9 176.7,262.5 177.1,265.7 176.0,268.0 173.0,267.2 169.0,266.4 166.0,266.0 165.5,263.6 166.3,259.0 164.9,255.5 166.1,252.3 165.0,250.0 164.4,246.2 163.5,244.6 163.6,240.8 163.9,237.5 163.5,234.8 162.6,231.3" fill="#8c0d16"/>
<polygon points="156.0,248.0 159.2,248.8 162.8,249.5 166.0,250.0 166.9,254.4 166.8,257.6 166.9,260.4 167.0,264.0 164.7,264.3 161.1,262.9 158.0,262.0 156.6,259.2 157.3,255.3 155.8,251.7" fill="#2a8a4c"/>
<polygon points="193.0,250.0 197.2,249.3 199.8,248.4 203.0,248.0 202.9,251.2 203.7,254.2 204.4,257.6 205.8,262.0 204.0,264.1 202.2,267.5 200.0,270.7 197.8,267.7 194.0,264.0 194.3,260.8 194.0,257.9 194.2,252.8" fill="#c0161e"/>
<polygon points="188.6,272.0 192.0,270.4 194.7,270.3 197.5,269.6 202.6,268.7 205.0,268.0 208.7,269.4 210.0,268.0 213.9,270.4 217.0,270.0 216.7,273.8 217.0,275.4 216.4,279.8 215.7,281.9 216.5,285.4 216.0,289.0 213.3,288.6 209.1,288.7 207.4,288.7 203.9,289.5 200.3,289.7 196.8,288.9 194.2,288.3 192.4,288.3 188.6,289.0 189.2,285.5 189.5,283.0 187.6,279.7 188.7,275.9" fill="#8fcf80"/>
<polygon points="211.5,270.0 215.5,269.7 219.5,269.4 222.0,269.0 223.0,271.6 222.3,274.9 221.5,278.2 222.2,281.7 223.0,285.7 223.0,289.0 218.7,289.3 215.4,289.5 212.0,289.0 211.7,285.1 211.2,283.6 212.0,279.7 211.9,276.4 210.9,273.6" fill="#c0161e"/>
<polygon points="240.0,276.0 242.9,276.3 246.2,274.5 250.2,275.1 253.2,273.1 256.0,273.6 258.9,274.3 261.7,275.4 264.8,276.8 267.4,278.0 272.4,278.9 274.5,280.0 273.3,283.4 272.5,286.8 272.0,289.0 269.6,289.6 265.6,288.1 261.5,288.9 259.9,288.7 257.0,289.2 252.0,289.1 250.6,288.6 247.1,289.3 242.7,289.6 240.0,289.0 239.4,285.6 240.5,281.6 240.7,279.0" fill="#c0161e"/>
<polygon points="172.9,141.4 177.2,140.0 176.8,143.6 177.0,147.0 177.2,150.0 175.7,155.7 180.0,158.6 185.0,161.5 184.3,167.2 180.0,170.0 178.2,166.5 175.7,162.9 170.0,161.5 170.0,157.2 172.9,152.9 172.9,148.6 173.2,145.6" fill="#a0101a"/>
<polygon points="181.4,185.8 184.9,184.0 188.6,181.5 194.3,180.1 196.5,175.8 198.6,180.1 201.7,180.7 205.1,182.2 203.2,185.7 201.5,188.6 198.1,189.6 194.3,191.5 190.7,193.3 187.2,195.8 185.3,193.4 184.3,190.1" fill="#3a9a5a"/>
<polygon points="248.7,157.2 252.4,156.9 256.0,156.9 260.1,157.2 259.0,160.5 257.3,164.3 256.4,168.8 255.8,172.9 257.3,178.6 253.7,179.8 250.1,180.1 247.2,177.1 244.4,174.3 244.4,168.6 248.1,166.9 251.5,165.8 251.0,162.8 249.5,160.2" fill="#1e7a44"/>
<polygon points="254.4,161.5 256.9,162.4 260.4,163.6 263.0,164.3 263.7,167.6 264.2,171.0 264.4,174.3 260.1,177.2 255.8,174.3 255.1,171.1 254.7,168.3 255.2,164.5" fill="#c0161e"/>
<polygon points="250.1,178.6 253.5,178.3 257.3,179.1 260.1,178.6 261.6,182.9 257.7,183.6 253.6,183.6 250.1,184.3" fill="#c0161e"/>
<polygon points="244.4,187.2 246.9,185.9 249.8,184.6 253.0,182.9 256.7,183.5 260.1,184.3 260.8,190.1 258.3,193.0 255.1,195.8 253.0,198.7 250.2,197.2 247.3,195.8 244.4,194.6 240.8,192.9 242.5,189.8" fill="#1e7a44"/>
<polygon points="225.1,208.7 228.8,207.2 231.5,205.8 234.6,207.5 237.2,208.7 240.2,209.0 243.7,210.1 241.5,215.0 237.2,217.3 233.8,217.2 230.1,218.0 225.8,215.0 225.3,212.2" fill="#8c0d16"/>
<polygon points="253.0,201.5 256.4,200.5 259.0,198.3 261.6,197.2 265.6,196.1 270.0,194.4 270.0,200.1 267.1,201.4 263.0,204.4 260.1,205.8 256.8,207.4 254.4,208.7 253.5,205.3" fill="#4a5645"/>
<polygon points="301.7,140.0 305.6,139.8 308.9,140.5 312.0,140.0 312.9,145.2 315.7,146.3 318.9,146.9 321.5,152.0 318.3,150.8 315.5,150.3 311.0,149.7 306.9,148.6 303.4,148.3 300.9,147.7 301.1,143.5" fill="#c0161e"/>
<polygon points="336.9,146.9 340.4,147.7 340.9,151.4 340.4,154.6 341.2,157.2 339.5,160.6 342.0,162.7 343.8,165.8 341.2,170.1 338.6,170.0 335.2,169.2 334.0,166.3 333.5,162.3 333.8,158.0 334.4,153.7 335.8,150.5" fill="#e4402f"/>
<polygon points="344.7,165.8 346.9,163.3 349.8,160.6 354.7,159.9 358.4,158.9 361.4,160.0 364.4,161.5 364.3,165.2 365.3,167.5 365.3,170.9 364.2,174.0 363.5,176.4 361.8,179.5 358.4,182.9 356.5,180.0 355.0,177.8 353.4,175.7 351.5,172.6 349.2,170.5 346.4,169.2" fill="#8c0d16"/>
<polygon points="365.3,158.0 368.3,158.0 372.1,157.2 376.4,154.6 377.3,158.3 377.3,162.3 373.9,165.8 369.7,164.5 366.1,164.0 365.2,160.7" fill="#8c0d16"/>
<polygon points="366.1,162.3 370.4,164.9 369.3,167.9 368.7,170.9 369.2,174.7 369.6,179.5 365.3,182.9 364.8,187.8 364.4,191.5 361.0,193.2 359.3,188.1 360.2,184.7 361.0,181.2 362.2,177.7 362.7,174.4 362.9,171.3 363.6,167.5" fill="#e4402f"/>
<polygon points="372.1,191.5 374.4,188.0 375.6,184.7 379.0,181.2 380.7,186.4 384.2,188.1 382.8,191.2 380.7,195.0 377.3,194.7 373.9,195.0" fill="#8c0d16"/>
<polygon points="351.5,182.9 355.0,184.7 356.7,189.8 360.1,191.5 361.4,194.6 361.8,198.4 358.4,202.7 354.6,203.1 349.8,203.6 348.0,200.3 346.4,196.7 347.7,193.7 349.8,191.5 350.6,186.9" fill="#2a9050"/>
<polygon points="308.6,186.4 313.7,184.7 316.3,188.4 318.9,191.5 321.9,190.7 325.3,189.6 327.5,188.1 329.5,185.5 332.6,183.8 334.4,187.2 338.1,186.6 342.1,186.4 343.1,190.2 342.6,193.0 342.9,196.7 339.9,200.3 337.8,203.6 334.4,207.0 333.3,209.0 330.9,212.1 330.0,215.3 329.2,219.0 325.1,217.8 320.6,217.3 316.5,216.7 313.7,215.6 312.6,212.4 312.0,208.7 314.4,205.4 315.5,201.8 315.3,198.9 313.7,195.0 311.3,191.7 310.6,189.2" fill="#8c0d16"/>
<polygon points="360.1,193.2 363.8,193.7 368.7,193.2 369.0,197.0 368.7,201.8 365.3,201.5 361.8,201.8 361.4,198.0" fill="#8c0d16"/>
<polygon points="341.2,206.1 344.3,204.4 348.1,203.6 351.7,202.7 355.1,202.0 358.4,201.8 362.4,202.9 365.3,203.6 365.3,208.7 360.7,209.0 356.7,210.4 353.7,210.0 349.8,208.7 346.2,210.0 342.9,212.1 342.7,209.6" fill="#b5141c"/>
<polygon points="369.6,196.7 373.2,195.7 375.4,195.1 379.0,195.0 380.2,198.8 380.7,201.8 378.7,204.2 375.6,206.1 372.3,206.4 368.7,206.1 369.0,203.0 368.8,199.3" fill="#2a9050"/>
<polygon points="365.3,208.7 367.4,206.2 368.7,203.6 373.3,202.1 377.3,201.8 380.7,203.6 381.2,207.3 381.3,210.4 381.6,213.9 379.0,219.0 376.1,221.5 373.9,224.2 371.1,223.5 368.2,221.8 365.3,220.7 363.6,215.6 364.2,212.5" fill="#e4402f"/>
<polygon points="305.2,177.8 308.2,176.4 312.0,176.1 314.4,178.1 317.2,181.2 320.0,181.5 323.2,182.9 322.3,187.2 318.1,187.8 313.7,188.1 310.1,186.9 306.9,184.7 305.3,182.0" fill="#4a5645"/>
<polygon points="407.0,212.0 411.4,209.9 415.0,209.0 416.9,210.4 420.9,211.9 423.0,214.0 422.8,217.9 421.0,221.5 420.0,225.0 416.8,224.0 414.0,223.4 410.0,222.0 409.0,217.7 407.4,214.6" fill="#3f9e5a"/>
<polygon points="384.0,228.0 388.9,226.4 392.0,226.0 394.6,229.4 397.0,232.8 398.0,236.0 400.9,236.5 403.9,239.6 407.0,240.0 405.5,242.5 402.0,246.0 399.3,244.1 395.5,243.1 392.0,242.0 388.5,239.9 386.0,238.0 385.8,235.0 384.3,230.6" fill="#f6ddd2"/>
<polygon points="336.8,249.0 338.8,245.7 341.3,243.2 342.9,240.5 344.8,237.0 350.1,235.7 353.6,236.7 358.1,237.0 360.9,238.5 364.1,240.9 367.5,242.4 367.5,246.2 366.4,249.0 366.1,253.0 363.2,254.7 360.8,257.0 355.4,259.7 355.0,262.8 354.1,265.6 354.1,269.1 350.1,270.4 347.9,268.0 344.8,265.1 341.6,263.7 339.4,261.4 336.8,259.7 337.1,256.4 336.7,252.5" fill="#8c0d16"/>
<polygon points="336.8,255.7 342.1,253.0 345.0,253.8 348.8,254.4 350.0,258.1 351.4,261.0 349.6,264.4 347.4,267.7 343.9,266.2 339.4,265.1 336.1,261.0" fill="#e4402f"/>
<polygon points="326.1,250.4 328.8,248.8 331.4,247.0 336.8,249.0 336.9,253.4 337.4,257.0 334.1,261.0 330.9,260.3 327.4,259.0 324.7,254.4" fill="#f6ddd2"/>
<polygon points="280.7,265.1 283.4,262.4 286.2,261.2 290.0,261.0 293.9,259.9 298.0,259.7 302.0,257.0 304.7,259.7 303.2,261.8 300.7,265.1 300.3,268.4 300.2,271.8 299.4,275.7 296.7,281.1 295.8,284.2 295.4,287.8 291.1,287.8 287.4,289.1 286.6,284.6 286.0,281.1 284.1,277.9 282.0,275.7 280.5,271.7 279.3,267.7" fill="#8c0d16"/>
<polygon points="304.7,258.4 308.3,258.1 310.3,258.3 313.6,257.7 316.7,257.0 319.8,255.6 324.1,255.0 323.5,258.8 321.3,261.7 320.7,265.1 316.7,267.7 313.5,269.6 310.0,272.0 307.4,274.4 303.6,274.7 300.7,275.7 300.1,272.2 298.7,269.1 300.1,266.3 302.0,263.7" fill="#e4402f"/>
<polygon points="284.7,282.4 288.7,282.1 292.2,282.2 295.4,282.4 296.0,285.4 296.2,288.8 295.8,292.1 296.7,295.0 293.0,295.0 290.4,295.1 287.0,294.7 283.4,295.0 283.7,291.4 284.0,288.3 284.9,285.3" fill="#c0161e"/>
<polygon points="298.0,281.1 302.0,279.7 306.1,279.8 310.1,279.7 312.7,285.1 312.2,288.5 311.8,291.6 311.4,295.0 307.3,294.5 304.2,294.5 300.6,295.0 296.7,295.0 296.9,291.8 297.2,287.9 298.1,284.5" fill="#c0161e"/>
<polygon points="327.4,271.7 330.2,272.5 334.1,273.1 339.4,275.7 344.8,275.7 348.8,279.7 346.8,281.9 344.8,285.1 340.6,286.1 337.5,285.7 334.1,286.4 331.4,290.4 327.4,287.8 326.9,284.9 326.1,281.1 326.3,278.5 326.7,275.4" fill="#2a8a4c"/>
<polygon points="270.0,286.4 274.5,285.4 278.0,285.1 282.0,286.0 286.0,287.8 286.8,290.9 288.7,295.0 285.7,294.7 282.7,295.2 279.4,294.4 275.8,294.7 273.0,295.5 270.0,295.0 270.3,290.6" fill="#3f9e5a"/>
<polygon points="316.7,290.4 320.7,287.8 322.8,291.6 324.7,295.0 320.2,295.3 316.1,295.0" fill="#b8e0a0"/>
<polygon points="404.0,260.0 407.5,258.5 411.0,258.0 414.5,260.6 417.0,262.0 415.8,265.0 414.0,270.0 409.5,269.7 406.0,270.0 406.3,267.0 404.7,263.7" fill="#8c0d16"/>
<polygon points="397.0,139.0 400.0,139.5 402.8,138.6 406.8,139.8 410.0,139.2 412.9,138.3 417.0,139.0 416.4,142.4 415.4,145.6 414.0,149.0 411.0,147.9 407.4,147.1 404.3,147.4 402.0,147.0 400.5,144.8 399.0,142.3" fill="#c0161e"/>
<polygon points="33.0,444.0 84.0,438.0 118.8,444.6 137.6,440.0 158.7,436.4 177.5,440.0 201.0,441.0 224.5,444.6 248.0,443.4 252.0,487.0 33.0,487.0" fill="#17623a"/>
<polygon points="135.0,451.0 138.0,450.9 141.5,451.5 143.7,450.9 147.2,451.2 150.9,451.2 153.7,451.0 155.5,450.1 158.0,450.5 161.3,450.0 164.3,449.4 168.5,450.0 171.3,451.1 173.6,450.3 176.3,449.4 180.4,449.2 183.0,450.0 187.0,451.0 189.8,453.9 191.1,454.3 195.0,456.0 192.0,456.7 188.5,458.2 185.9,459.1 183.2,460.9 180.0,462.0 177.1,461.1 174.8,461.8 170.8,461.4 167.6,462.2 164.9,462.9 161.9,461.7 159.7,462.6 156.9,462.7 153.1,462.7 150.0,462.0 146.8,459.4 144.0,458.7 143.1,455.9 140.5,454.2 138.2,452.2" fill="#2f9a52"/>
<polygon points="200.0,446.0 203.0,445.4 207.0,446.8 209.5,446.7 211.1,446.5 214.2,445.8 218.0,445.5 221.1,445.9 223.1,445.6 227.0,446.6 230.5,445.6 233.8,446.5 236.4,445.5 239.7,446.8 241.8,446.4 245.8,446.8 248.0,446.0 248.5,449.5 247.6,453.0 248.9,455.5 249.3,459.3 249.7,462.2 248.9,465.1 248.2,467.9 248.7,470.5 248.6,475.0 248.7,477.2 249.9,480.3 250.1,483.4 250.0,487.0 247.4,487.3 244.6,486.8 240.4,486.7 238.6,486.2 235.8,487.6 232.7,486.3 229.4,486.2 225.4,486.4 223.9,487.6 220.0,487.0 217.2,487.5 213.7,486.8 211.9,486.5 207.0,487.7 205.0,487.0 205.5,483.7 204.6,479.9 202.9,476.5 202.6,474.2 202.1,471.6 202.6,467.5 202.8,464.9 202.4,460.8 201.6,459.3 201.3,455.9 199.9,451.8 200.9,449.2" fill="#536a4c"/>
<polygon points="117.6,366.0 134.0,367.0 150.0,374.0 165.0,372.0 172.0,378.0 182.0,388.0 193.0,386.5 206.0,394.0 217.8,405.5 229.0,415.0 240.7,428.4 246.4,440.0 247.0,452.0 126.0,452.0 93.6,443.4 85.9,436.0 85.9,431.7 90.6,417.6 95.3,401.1 100.0,391.7 107.0,380.0 111.7,372.9" fill="#4a62ab"/>
<polygon points="100.0,395.0 140.0,404.0 170.0,402.0 215.0,410.0 238.0,430.0 240.0,450.0 130.0,450.0 92.0,440.0" fill="#3a5098" opacity="0.8"/>
<polygon points="146.0,372.0 148.6,372.5 154.0,372.8 156.5,374.0 159.1,373.5 163.0,371.7 166.0,371.2 168.0,369.4 169.4,371.5 170.5,375.2 172.0,378.0 172.5,380.1 175.0,384.0 179.5,384.0 182.9,384.9 186.3,387.0 189.3,387.0 187.1,388.8 182.7,388.4 179.9,390.5 176.6,392.0 173.3,395.3 170.5,397.6 166.4,398.6 164.3,399.4 160.0,400.6 156.4,401.0 152.8,399.1 151.0,396.0 147.2,393.0 145.0,390.0 141.8,385.4 145.5,382.2 148.0,381.0 147.8,378.7 146.2,375.8" fill="#0b3120"/>
<polygon points="152.0,380.0 154.9,379.2 159.4,377.9 163.2,377.2 166.0,377.0 167.3,379.9 169.7,383.4 172.0,386.0 170.4,388.9 167.4,390.0 165.3,392.1 162.0,394.0 158.6,391.4 157.4,389.0 154.0,388.0 153.3,383.7" fill="#1d7a42"/>
<polygon points="167.2,368.7 178.6,360.0 201.5,355.8 215.8,353.8 220.0,357.0 215.8,362.8 207.2,365.8 204.4,374.4 193.0,383.0 178.6,385.9 167.2,383.0" fill="#4a62ab"/>
<polygon points="306.0,398.0 314.5,380.6 331.5,372.0 343.0,363.4 357.0,359.0 374.4,360.6 378.7,366.3 377.3,385.0 360.0,388.0 355.8,396.4 347.0,399.0 350.0,405.0 363.0,415.0 370.0,420.0 373.0,434.0 377.0,448.0 372.0,462.0 360.0,487.0 330.0,487.0 327.6,448.0 320.5,434.0 315.8,420.0 310.0,410.0" fill="#4a62ab"/>
<ellipse cx="385.5" cy="447" rx="9.5" ry="10.5" fill="#5f9ea2" stroke="#c8d0cc" stroke-width="1.2"/>
<polygon points="236.0,318.0 239.7,317.2 244.0,317.9 247.0,319.0 250.5,319.3 252.4,322.1 256.4,324.5 259.0,325.0 258.5,327.4 258.0,331.6 258.0,334.0 256.1,335.2 253.2,337.7 250.0,340.0 252.0,343.3 254.7,345.4 258.0,348.0 254.8,350.1 251.9,354.2 250.0,356.0 250.8,360.3 250.6,363.4 250.4,367.3 250.4,370.6 247.1,372.0 243.6,374.8 241.0,377.6 238.4,380.5 235.0,381.5 231.8,383.9 229.2,385.8 228.1,382.4 225.5,379.6 224.5,375.3 221.3,372.6 219.1,370.2 218.5,368.9 215.7,365.8 214.0,364.0 216.3,361.1 216.9,357.8 220.0,354.0 222.6,351.8 225.4,349.2 228.0,348.0 230.1,343.8 232.5,342.4 234.0,338.0 235.3,334.4 236.8,332.3 237.0,328.0 237.4,325.0 236.0,320.9" fill="#9fa614"/>
<polygon points="260.0,336.0 263.2,335.9 266.0,335.0 268.8,337.5 271.6,340.0 270.8,344.2 270.1,346.2 270.0,350.5 265.3,349.9 262.0,349.0 262.2,345.8 260.1,342.0 259.7,338.9" fill="#d8eca0"/>
<polygon points="271.0,338.0 275.3,339.7 278.0,340.0 277.1,342.5 278.0,346.0 274.0,346.5 271.0,346.0 271.0,342.1" fill="#3f9e5a"/>
<polygon points="69.0,392.0 72.1,391.9 76.2,392.4 79.1,391.2 81.5,392.2 84.8,391.3 88.0,392.0 87.8,395.8 88.9,400.5 88.0,403.6 84.3,404.1 81.2,403.4 77.7,403.3 75.6,404.0 72.4,404.1 69.0,403.6 68.9,400.2 68.4,395.2" fill="#e0eca8"/>
<polygon points="35.0,430.0 38.9,430.6 42.2,429.0 44.5,430.0 43.5,433.1 45.1,437.2 45.3,441.1 44.5,443.7 41.3,443.7 37.4,444.4 35.0,443.7 34.1,439.9 34.9,437.1 34.6,433.2" fill="#e8eca8"/>
<polygon points="75.0,432.0 77.4,432.2 81.9,431.1 84.5,432.0 84.6,435.8 84.5,438.0 81.0,437.1 79.1,437.8 75.0,438.0 75.6,435.4" fill="#d8e8a0"/>
<polygon points="33.0,380.7 36.2,380.0 39.9,380.6 41.9,381.0 45.5,381.3 48.0,380.7 48.7,383.7 48.7,387.8 47.9,389.9 47.8,393.7 47.7,397.7 47.4,400.2 47.1,404.6 48.0,407.4 45.6,408.2 42.0,407.0 38.5,407.9 35.4,408.1 33.0,407.4 33.5,403.9 33.5,400.8 32.5,397.2 32.4,393.2 32.3,390.9 32.1,387.5 33.6,384.9" fill="#0b3120"/>
<polygon points="88.0,390.0 91.8,390.3 96.0,390.0 96.9,392.5 96.4,397.8 95.6,399.4 96.0,403.6 92.0,402.8 88.0,403.6 87.5,400.8 88.3,397.2 87.8,393.2" fill="#0b3120"/>
<polygon points="44.0,458.0 46.6,457.3 50.1,456.8 54.9,457.7 57.5,456.5 61.8,456.5 64.6,457.0 63.9,459.9 63.9,463.1 64.5,467.5 64.4,469.9 63.9,472.4 64.6,476.0 60.7,476.9 56.7,475.4 53.4,476.0 50.0,476.0 48.1,472.7 46.3,470.4 44.0,468.0 44.2,464.5 43.6,460.7" fill="#4a62ab"/>
<polyline points="40.0,452.0 44.0,458.0 44.9,462.5 45.0,466.0 47.1,469.8 50.0,474.0" fill="none" stroke="#d6d8d8" stroke-width="4.800000000000001" stroke-linejoin="round" stroke-linecap="round" opacity="0.8"/><polyline points="40.0,452.0 44.0,458.0 44.9,462.5 45.0,466.0 47.1,469.8 50.0,474.0" fill="none" stroke="#727272" stroke-width="1.6" stroke-linejoin="round" stroke-linecap="round"/>
<polyline points="46.0,144.7 50.9,146.6 55.8,147.8 59.5,149.6 64.5,150.5 69.8,152.0 74.0,153.4 78.8,154.7" fill="none" stroke="#d6d8d8" stroke-width="5.2" stroke-linejoin="round" stroke-linecap="round" opacity="0.8"/><polyline points="46.0,144.7 50.9,146.6 55.8,147.8 59.5,149.6 64.5,150.5 69.8,152.0 74.0,153.4 78.8,154.7" fill="none" stroke="#727272" stroke-width="2.0" stroke-linejoin="round" stroke-linecap="round"/>
<polyline points="86.0,139.0 84.4,143.2 81.7,147.6 78.8,154.7" fill="none" stroke="#d6d8d8" stroke-width="5.2" stroke-linejoin="round" stroke-linecap="round" opacity="0.8"/><polyline points="86.0,139.0 84.4,143.2 81.7,147.6 78.8,154.7" fill="none" stroke="#727272" stroke-width="2.0" stroke-linejoin="round" stroke-linecap="round"/>
<polyline points="121.7,207.7 121.4,211.3 120.0,216.0 122.2,220.1 125.5,223.4 127.6,227.4 130.0,230.6 134.5,234.4 138.2,237.3 141.8,240.6 142.0,245.1 143.1,249.5 143.0,253.5 141.1,257.7 138.2,261.4 136.0,265.0 131.8,266.9 127.2,268.2 123.0,270.7 118.9,272.0 114.5,272.3 111.2,272.8 106.7,273.4 102.0,273.8 98.4,274.3 94.1,274.7 90.0,275.0 85.0,275.1 80.4,274.5 76.5,274.2 72.2,273.4 67.0,273.6 63.0,272.8 58.4,272.1 54.7,270.9 50.0,270.7 45.7,270.2 41.2,270.3 37.5,269.1 33.0,269.0" fill="none" stroke="#d6d8d8" stroke-width="5.2" stroke-linejoin="round" stroke-linecap="round" opacity="0.8"/><polyline points="121.7,207.7 121.4,211.3 120.0,216.0 122.2,220.1 125.5,223.4 127.6,227.4 130.0,230.6 134.5,234.4 138.2,237.3 141.8,240.6 142.0,245.1 143.1,249.5 143.0,253.5 141.1,257.7 138.2,261.4 136.0,265.0 131.8,266.9 127.2,268.2 123.0,270.7 118.9,272.0 114.5,272.3 111.2,272.8 106.7,273.4 102.0,273.8 98.4,274.3 94.1,274.7 90.0,275.0 85.0,275.1 80.4,274.5 76.5,274.2 72.2,273.4 67.0,273.6 63.0,272.8 58.4,272.1 54.7,270.9 50.0,270.7 45.7,270.2 41.2,270.3 37.5,269.1 33.0,269.0" fill="none" stroke="#727272" stroke-width="2.0" stroke-linejoin="round" stroke-linecap="round"/>
<polyline points="70.0,207.7 67.8,212.0 66.2,215.6 64.5,219.0 61.6,222.8 58.8,227.7 54.0,229.0 49.2,229.8 44.5,230.6 38.8,231.5 33.0,233.5" fill="none" stroke="#d6d8d8" stroke-width="5.2" stroke-linejoin="round" stroke-linecap="round" opacity="0.8"/><polyline points="70.0,207.7 67.8,212.0 66.2,215.6 64.5,219.0 61.6,222.8 58.8,227.7 54.0,229.0 49.2,229.8 44.5,230.6 38.8,231.5 33.0,233.5" fill="none" stroke="#727272" stroke-width="2.0" stroke-linejoin="round" stroke-linecap="round"/>
<polyline points="159.0,273.6 160.6,277.4 162.5,281.6 163.5,284.8 167.6,287.0 171.0,289.5 174.0,293.6 177.0,297.0 181.4,297.4 185.3,298.9 190.0,299.0 194.4,299.4 199.8,301.0 202.7,303.5 205.5,306.7 209.9,308.8 215.0,310.5 219.2,311.8 223.2,313.2 226.5,314.4 228.4,322.0 224.6,327.7 226.5,335.0 223.5,339.3 220.8,343.0 216.5,344.3 213.1,345.1 209.0,346.8 203.6,352.5 199.7,354.8 196.0,356.3 190.3,357.8 184.5,358.2 180.4,360.3 176.8,361.5 173.0,364.0 167.4,369.7 166.4,375.4" fill="none" stroke="#d6d8d8" stroke-width="5.2" stroke-linejoin="round" stroke-linecap="round" opacity="0.8"/><polyline points="159.0,273.6 160.6,277.4 162.5,281.6 163.5,284.8 167.6,287.0 171.0,289.5 174.0,293.6 177.0,297.0 181.4,297.4 185.3,298.9 190.0,299.0 194.4,299.4 199.8,301.0 202.7,303.5 205.5,306.7 209.9,308.8 215.0,310.5 219.2,311.8 223.2,313.2 226.5,314.4 228.4,322.0 224.6,327.7 226.5,335.0 223.5,339.3 220.8,343.0 216.5,344.3 213.1,345.1 209.0,346.8 203.6,352.5 199.7,354.8 196.0,356.3 190.3,357.8 184.5,358.2 180.4,360.3 176.8,361.5 173.0,364.0 167.4,369.7 166.4,375.4" fill="none" stroke="#727272" stroke-width="2.0" stroke-linejoin="round" stroke-linecap="round"/>
<polyline points="33.0,339.2 37.6,340.6 41.9,340.8 46.4,341.5 51.8,342.4 55.9,343.7 59.6,341.7 63.7,339.6 66.4,338.2 70.0,336.3 74.2,334.6 80.3,333.4 85.7,333.4 89.8,336.2 93.2,338.9 97.2,341.5 101.7,343.7 103.6,348.8 106.3,352.9 109.1,357.2 110.3,361.5 113.1,366.6 117.6,366.0" fill="none" stroke="#d6d8d8" stroke-width="5.2" stroke-linejoin="round" stroke-linecap="round" opacity="0.8"/><polyline points="33.0,339.2 37.6,340.6 41.9,340.8 46.4,341.5 51.8,342.4 55.9,343.7 59.6,341.7 63.7,339.6 66.4,338.2 70.0,336.3 74.2,334.6 80.3,333.4 85.7,333.4 89.8,336.2 93.2,338.9 97.2,341.5 101.7,343.7 103.6,348.8 106.3,352.9 109.1,357.2 110.3,361.5 113.1,366.6 117.6,366.0" fill="none" stroke="#727272" stroke-width="2.0" stroke-linejoin="round" stroke-linecap="round"/>
<polyline points="74.2,334.6 77.4,337.3 79.8,340.5 83.4,343.7 84.6,348.7 86.0,352.6 88.0,357.5 88.3,361.6 89.7,367.1 90.2,371.2 91.2,376.8 92.5,382.7 99.4,385.0 106.3,382.7 108.4,379.5 110.9,375.8" fill="none" stroke="#d6d8d8" stroke-width="5.2" stroke-linejoin="round" stroke-linecap="round" opacity="0.8"/><polyline points="74.2,334.6 77.4,337.3 79.8,340.5 83.4,343.7 84.6,348.7 86.0,352.6 88.0,357.5 88.3,361.6 89.7,367.1 90.2,371.2 91.2,376.8 92.5,382.7 99.4,385.0 106.3,382.7 108.4,379.5 110.9,375.8" fill="none" stroke="#727272" stroke-width="2.0" stroke-linejoin="round" stroke-linecap="round"/>
<polyline points="92.5,368.9 99.4,366.6 104.2,369.5 108.6,371.2" fill="none" stroke="#d6d8d8" stroke-width="4.800000000000001" stroke-linejoin="round" stroke-linecap="round" opacity="0.8"/><polyline points="92.5,368.9 99.4,366.6 104.2,369.5 108.6,371.2" fill="none" stroke="#727272" stroke-width="1.6" stroke-linejoin="round" stroke-linecap="round"/>
<polyline points="33.0,410.1 37.4,411.1 41.8,412.0 46.7,412.4 51.4,412.2 56.2,413.1 60.5,413.6 64.5,411.0 69.6,407.9 73.9,407.2 78.6,406.9 83.2,405.6 88.0,405.6 91.5,407.5 94.8,410.1" fill="none" stroke="#d6d8d8" stroke-width="5.2" stroke-linejoin="round" stroke-linecap="round" opacity="0.8"/><polyline points="33.0,410.1 37.4,411.1 41.8,412.0 46.7,412.4 51.4,412.2 56.2,413.1 60.5,413.6 64.5,411.0 69.6,407.9 73.9,407.2 78.6,406.9 83.2,405.6 88.0,405.6 91.5,407.5 94.8,410.1" fill="none" stroke="#727272" stroke-width="2.0" stroke-linejoin="round" stroke-linecap="round"/>
<polyline points="33.0,444.5 37.1,445.1 41.7,446.1 46.7,446.8 51.1,446.4 55.0,446.3 59.3,445.4 62.9,444.5 67.3,444.5 70.6,441.7 74.9,439.9 78.8,437.6 83.3,438.0 88.0,437.6" fill="none" stroke="#d6d8d8" stroke-width="5.2" stroke-linejoin="round" stroke-linecap="round" opacity="0.8"/><polyline points="33.0,444.5 37.1,445.1 41.7,446.1 46.7,446.8 51.1,446.4 55.0,446.3 59.3,445.4 62.9,444.5 67.3,444.5 70.6,441.7 74.9,439.9 78.8,437.6 83.3,438.0 88.0,437.6" fill="none" stroke="#727272" stroke-width="2.0" stroke-linejoin="round" stroke-linecap="round"/>
<polyline points="113.1,366.6 112.0,372.4 110.9,378.0 107.5,381.5 104.9,384.1 101.7,387.2 100.5,391.3 99.1,394.9 97.1,398.7 95.8,403.5 95.5,408.0 94.8,412.4 92.0,417.0 90.6,422.1 88.0,426.2 87.2,432.2 85.7,437.6 81.1,439.9 77.0,441.5 71.8,442.4 67.3,444.5" fill="none" stroke="#d6d8d8" stroke-width="4.800000000000001" stroke-linejoin="round" stroke-linecap="round" opacity="0.8"/><polyline points="113.1,366.6 112.0,372.4 110.9,378.0 107.5,381.5 104.9,384.1 101.7,387.2 100.5,391.3 99.1,394.9 97.1,398.7 95.8,403.5 95.5,408.0 94.8,412.4 92.0,417.0 90.6,422.1 88.0,426.2 87.2,432.2 85.7,437.6 81.1,439.9 77.0,441.5 71.8,442.4 67.3,444.5" fill="none" stroke="#727272" stroke-width="1.6" stroke-linejoin="round" stroke-linecap="round"/>
<polyline points="117.6,366.0 121.2,366.7 125.4,366.1 129.9,366.9 134.0,367.0 138.6,368.4 142.0,370.0 146.0,372.0 151.2,372.8 156.5,374.0 160.8,371.9 164.3,371.1 168.0,369.4" fill="none" stroke="#d6d8d8" stroke-width="4.800000000000001" stroke-linejoin="round" stroke-linecap="round" opacity="0.8"/><polyline points="117.6,366.0 121.2,366.7 125.4,366.1 129.9,366.9 134.0,367.0 138.6,368.4 142.0,370.0 146.0,372.0 151.2,372.8 156.5,374.0 160.8,371.9 164.3,371.1 168.0,369.4" fill="none" stroke="#727272" stroke-width="1.6" stroke-linejoin="round" stroke-linecap="round"/>
<polyline points="146.0,372.0 147.0,376.4 148.0,381.0 141.8,385.4 145.0,390.0 148.1,393.0 151.0,396.0 156.4,401.0 161.6,399.6 165.6,398.6 170.5,397.6 174.8,393.7 179.9,390.5 184.1,388.2 189.3,387.0" fill="none" stroke="#d6d8d8" stroke-width="4.9" stroke-linejoin="round" stroke-linecap="round" opacity="0.8"/><polyline points="146.0,372.0 147.0,376.4 148.0,381.0 141.8,385.4 145.0,390.0 148.1,393.0 151.0,396.0 156.4,401.0 161.6,399.6 165.6,398.6 170.5,397.6 174.8,393.7 179.9,390.5 184.1,388.2 189.3,387.0" fill="none" stroke="#727272" stroke-width="1.7" stroke-linejoin="round" stroke-linecap="round"/>
<polyline points="167.2,368.7 170.5,365.6 175.3,362.9 178.6,360.0 183.3,358.7 187.7,357.7 192.8,357.1 197.3,356.4 201.5,355.8 205.8,355.1 211.6,354.7 215.8,353.8 220.0,357.0 215.8,362.8 211.9,363.8 207.2,365.8 205.3,369.9 204.4,374.4 200.9,377.0 196.2,379.9 193.0,383.0 188.7,384.0 183.7,385.5 178.6,385.9 172.8,384.0 167.2,383.0 167.7,378.0 166.8,374.0 167.2,368.7" fill="none" stroke="#d6d8d8" stroke-width="5.0" stroke-linejoin="round" stroke-linecap="round" opacity="0.8"/><polyline points="167.2,368.7 170.5,365.6 175.3,362.9 178.6,360.0 183.3,358.7 187.7,357.7 192.8,357.1 197.3,356.4 201.5,355.8 205.8,355.1 211.6,354.7 215.8,353.8 220.0,357.0 215.8,362.8 211.9,363.8 207.2,365.8 205.3,369.9 204.4,374.4 200.9,377.0 196.2,379.9 193.0,383.0 188.7,384.0 183.7,385.5 178.6,385.9 172.8,384.0 167.2,383.0 167.7,378.0 166.8,374.0 167.2,368.7" fill="none" stroke="#727272" stroke-width="1.8" stroke-linejoin="round" stroke-linecap="round"/>
<polyline points="182.0,388.0 186.9,387.8 193.0,386.5 197.8,388.5 201.3,391.1 206.0,394.0 209.4,397.1 211.7,399.7 215.2,402.3 217.8,405.5 221.7,409.0 224.8,412.2 229.0,415.0 232.5,417.8 234.8,421.7 237.9,424.6 240.7,428.4 242.8,432.7 244.6,435.9 246.4,440.0 244.5,447.5" fill="none" stroke="#d6d8d8" stroke-width="5.2" stroke-linejoin="round" stroke-linecap="round" opacity="0.8"/><polyline points="182.0,388.0 186.9,387.8 193.0,386.5 197.8,388.5 201.3,391.1 206.0,394.0 209.4,397.1 211.7,399.7 215.2,402.3 217.8,405.5 221.7,409.0 224.8,412.2 229.0,415.0 232.5,417.8 234.8,421.7 237.9,424.6 240.7,428.4 242.8,432.7 244.6,435.9 246.4,440.0 244.5,447.5" fill="none" stroke="#727272" stroke-width="2.0" stroke-linejoin="round" stroke-linecap="round"/>
<polyline points="187.0,387.0 190.1,389.5 193.9,391.5 196.9,394.3 201.0,396.4 205.5,398.5 209.2,401.7 212.8,403.5 216.6,406.4 219.4,409.7 223.2,411.7 226.9,415.2 232.3,416.5 238.6,417.6 242.5,418.7 246.7,419.4 251.0,420.4 255.2,421.6 259.8,422.3 264.4,424.2 267.3,425.7 271.6,427.0 276.1,427.5 280.0,429.3 284.4,430.9 288.1,432.6 292.4,432.8 296.0,434.4 300.0,436.0 304.1,436.4 308.5,437.8 312.5,439.2 316.0,440.0" fill="none" stroke="#d6d8d8" stroke-width="5.2" stroke-linejoin="round" stroke-linecap="round" opacity="0.8"/><polyline points="187.0,387.0 190.1,389.5 193.9,391.5 196.9,394.3 201.0,396.4 205.5,398.5 209.2,401.7 212.8,403.5 216.6,406.4 219.4,409.7 223.2,411.7 226.9,415.2 232.3,416.5 238.6,417.6 242.5,418.7 246.7,419.4 251.0,420.4 255.2,421.6 259.8,422.3 264.4,424.2 267.3,425.7 271.6,427.0 276.1,427.5 280.0,429.3 284.4,430.9 288.1,432.6 292.4,432.8 296.0,434.4 300.0,436.0 304.1,436.4 308.5,437.8 312.5,439.2 316.0,440.0" fill="none" stroke="#727272" stroke-width="2.0" stroke-linejoin="round" stroke-linecap="round"/>
<polyline points="79.6,436.5 83.9,438.3 88.8,441.7 93.6,443.4 98.0,444.4 102.1,444.8 106.3,445.6 109.8,446.7 113.3,447.1 117.4,447.4 122.3,447.8 126.0,449.0 130.0,448.9 133.5,449.8 137.4,449.5 142.5,449.2 146.2,449.7 150.2,450.5 153.8,450.1 157.9,450.8 162.2,450.2 165.7,450.6 170.0,451.0 173.9,451.6 178.1,451.2 181.5,451.2 186.4,451.2 189.9,451.5 193.6,450.7 197.7,450.9 201.5,450.5 206.1,450.8 210.1,450.6 214.6,451.2 218.3,450.8 222.1,451.5 225.7,450.8 229.6,450.9 234.2,451.1 237.8,451.2 241.8,450.9 246.0,451.0" fill="none" stroke="#d6d8d8" stroke-width="4.800000000000001" stroke-linejoin="round" stroke-linecap="round" opacity="0.8"/><polyline points="79.6,436.5 83.9,438.3 88.8,441.7 93.6,443.4 98.0,444.4 102.1,444.8 106.3,445.6 109.8,446.7 113.3,447.1 117.4,447.4 122.3,447.8 126.0,449.0 130.0,448.9 133.5,449.8 137.4,449.5 142.5,449.2 146.2,449.7 150.2,450.5 153.8,450.1 157.9,450.8 162.2,450.2 165.7,450.6 170.0,451.0 173.9,451.6 178.1,451.2 181.5,451.2 186.4,451.2 189.9,451.5 193.6,450.7 197.7,450.9 201.5,450.5 206.1,450.8 210.1,450.6 214.6,451.2 218.3,450.8 222.1,451.5 225.7,450.8 229.6,450.9 234.2,451.1 237.8,451.2 241.8,450.9 246.0,451.0" fill="none" stroke="#727272" stroke-width="1.6" stroke-linejoin="round" stroke-linecap="round"/>
<polyline points="305.5,325.8 304.4,329.6 302.7,333.4 305.9,336.9 309.3,341.0 313.0,346.8 316.5,349.1 320.8,350.6 323.7,355.6 326.5,360.0 327.6,364.4 328.4,367.8 333.0,369.7 338.2,366.1 343.0,363.4 348.1,361.8 352.1,360.3 357.0,359.0 361.9,359.3 366.3,360.4 369.8,359.6 374.4,360.6 378.7,366.3 378.0,371.2 377.6,375.5 378.0,379.7 377.3,385.0 372.9,385.5 368.2,386.4 364.2,387.3 360.0,388.0 358.0,392.4 355.8,396.4 351.8,397.4 347.0,399.0 350.0,405.0 353.2,407.4 356.0,410.6 359.6,412.7 363.0,415.0 365.9,418.4 370.0,423.2 373.0,426.4 373.0,431.4 371.8,435.0 372.0,440.0 373.9,443.6 377.0,448.0 381.0,445.3 385.7,443.0 390.0,440.0 394.4,440.7 397.5,442.9 402.0,444.0 406.1,444.6 410.0,446.0" fill="none" stroke="#d6d8d8" stroke-width="4.7" stroke-linejoin="round" stroke-linecap="round" opacity="0.8"/><polyline points="305.5,325.8 304.4,329.6 302.7,333.4 305.9,336.9 309.3,341.0 313.0,346.8 316.5,349.1 320.8,350.6 323.7,355.6 326.5,360.0 327.6,364.4 328.4,367.8 333.0,369.7 338.2,366.1 343.0,363.4 348.1,361.8 352.1,360.3 357.0,359.0 361.9,359.3 366.3,360.4 369.8,359.6 374.4,360.6 378.7,366.3 378.0,371.2 377.6,375.5 378.0,379.7 377.3,385.0 372.9,385.5 368.2,386.4 364.2,387.3 360.0,388.0 358.0,392.4 355.8,396.4 351.8,397.4 347.0,399.0 350.0,405.0 353.2,407.4 356.0,410.6 359.6,412.7 363.0,415.0 365.9,418.4 370.0,423.2 373.0,426.4 373.0,431.4 371.8,435.0 372.0,440.0 373.9,443.6 377.0,448.0 381.0,445.3 385.7,443.0 390.0,440.0 394.4,440.7 397.5,442.9 402.0,444.0 406.1,444.6 410.0,446.0" fill="none" stroke="#727272" stroke-width="1.5" stroke-linejoin="round" stroke-linecap="round"/>
<polyline points="306.0,398.0 307.8,393.8 310.3,388.8 312.7,384.8 314.5,380.6 319.1,378.2 323.1,376.7 327.4,373.7 331.5,372.0" fill="none" stroke="#d6d8d8" stroke-width="4.7" stroke-linejoin="round" stroke-linecap="round" opacity="0.8"/><polyline points="306.0,398.0 307.8,393.8 310.3,388.8 312.7,384.8 314.5,380.6 319.1,378.2 323.1,376.7 327.4,373.7 331.5,372.0" fill="none" stroke="#727272" stroke-width="1.5" stroke-linejoin="round" stroke-linecap="round"/>
<polyline points="411.6,390.6 411.6,394.7 411.6,398.7 411.6,402.8 411.6,406.9 411.6,410.9 411.6,415.0 411.6,419.1 411.6,423.2 411.6,427.2 411.6,431.3 411.6,435.4 411.6,439.4 411.6,443.5" fill="none" stroke="#d6d8d8" stroke-width="4.6" stroke-linejoin="round" stroke-linecap="round" opacity="0.8"/><polyline points="411.6,390.6 411.6,394.7 411.6,398.7 411.6,402.8 411.6,406.9 411.6,410.9 411.6,415.0 411.6,419.1 411.6,423.2 411.6,427.2 411.6,431.3 411.6,435.4 411.6,439.4 411.6,443.5" fill="none" stroke="#727272" stroke-width="1.4" stroke-linejoin="round" stroke-linecap="round"/>
<polyline points="434.5,289.0 438.7,290.4 442.7,291.2 446.0,293.0 450.1,292.2 454.5,289.9 458.0,289.0 464.1,290.3 469.0,292.0" fill="none" stroke="#d6d8d8" stroke-width="4.800000000000001" stroke-linejoin="round" stroke-linecap="round" opacity="0.8"/><polyline points="434.5,289.0 438.7,290.4 442.7,291.2 446.0,293.0 450.1,292.2 454.5,289.9 458.0,289.0 464.1,290.3 469.0,292.0" fill="none" stroke="#727272" stroke-width="1.6" stroke-linejoin="round" stroke-linecap="round"/>
<polyline points="440.0,275.0 444.3,272.9 449.4,271.8 454.0,269.7 458.0,268.0 463.4,269.5 469.0,270.0" fill="none" stroke="#d6d8d8" stroke-width="4.800000000000001" stroke-linejoin="round" stroke-linecap="round" opacity="0.8"/><polyline points="440.0,275.0 444.3,272.9 449.4,271.8 454.0,269.7 458.0,268.0 463.4,269.5 469.0,270.0" fill="none" stroke="#727272" stroke-width="1.6" stroke-linejoin="round" stroke-linecap="round"/>
<rect x="37.6" y="203" width="16.4" height="114.5" rx="2" fill="#e4eee8" opacity="0.74"/>
<path d="M41 206 l4.5 2.5 l4.5 -2.5 M41 209 l4.5 2.5 l4.5 -2.5" fill="none" stroke="#333" stroke-width="1"/><circle cx="45" cy="222" r="3.2" fill="none" stroke="#222" stroke-width="1.1"/><path d="M47.3 224.3 l2.5 2.5" stroke="#222" stroke-width="1.3"/><circle cx="45" cy="237" r="3.2" fill="none" stroke="#222" stroke-width="1.1"/><path d="M47.3 239.3 l2.5 2.5" stroke="#222" stroke-width="1.3"/><circle cx="45" cy="267" r="3.2" fill="none" stroke="#222" stroke-width="1.1"/><path d="M47.3 269.3 l2.5 2.5" stroke="#222" stroke-width="1.3"/><path d="M43.5 222 h3 M45 220.5 v3 M43.5 237 h3" stroke="#222" stroke-width="0.8"/><path d="M49 249 l-8.5 4.5 l4.5 0.8 l1 4.5z" fill="none" stroke="#222" stroke-width="1.1"/><path d="M41.5 286.5 v-9 l8 9z" fill="none" stroke="#222" stroke-width="1.1"/><circle cx="45.5" cy="295.7" r="3.6" fill="none" stroke="#aaa" stroke-width="0.9"/><circle cx="45.5" cy="295.7" r="1.3" fill="none" stroke="#aaa" stroke-width="0.8"/><path d="M42 307.5 q3 -1.5 4 0.5 q-3 1.5 -2 3 q2 1 4 -1 q1 2 -1.5 3.5 q-2.5 1 -3 -0.5" fill="none" stroke="#222" stroke-width="1"/>
<rect x="66" y="448.7" width="371" height="33" fill="#e4ebe6" opacity="0.82"/>
<text x="68.7" y="457.4" font-family="Liberation Sans, sans-serif" font-size="7.25" font-weight="bold" fill="#484848">NDVI - Comparaison à la moyenne (15) - Du 01/03/2026 Au 09/03/2026 (%)</text>
<rect x="67.1" y="461.8" width="20.5" height="11.8" rx="2" fill="#7a0e15"/>
<text x="77.3" y="480" font-family="Liberation Sans, sans-serif" font-size="4.4" fill="#5e5e5e" text-anchor="middle">< -30</text>
<rect x="91.9" y="461.8" width="20.5" height="11.8" rx="2" fill="#a9161b"/>
<text x="102.1" y="480" font-family="Liberation Sans, sans-serif" font-size="4.4" fill="#5e5e5e" text-anchor="middle">-30/-20</text>
<rect x="116.8" y="461.8" width="20.5" height="11.8" rx="2" fill="#da322b"/>
<text x="127.0" y="480" font-family="Liberation Sans, sans-serif" font-size="4.4" fill="#5e5e5e" text-anchor="middle">-20/-10</text>
<rect x="141.6" y="461.8" width="20.5" height="11.8" rx="2" fill="#f36b48"/>
<text x="151.8" y="480" font-family="Liberation Sans, sans-serif" font-size="4.4" fill="#5e5e5e" text-anchor="middle">-10/-7.00</text>
<rect x="166.4" y="461.8" width="20.5" height="11.8" rx="2" fill="#f39090"/>
<text x="176.6" y="480" font-family="Liberation Sans, sans-serif" font-size="4.4" fill="#5e5e5e" text-anchor="middle">-7.00/-5...</text>
<rect x="191.2" y="461.8" width="20.5" height="11.8" rx="2" fill="#f6b89e"/>
<text x="201.4" y="480" font-family="Liberation Sans, sans-serif" font-size="4.4" fill="#5e5e5e" text-anchor="middle">-5.00/-3...</text>
<rect x="216.1" y="461.8" width="20.5" height="11.8" rx="2" fill="#f6e1d5"/>
<text x="226.3" y="480" font-family="Liberation Sans, sans-serif" font-size="4.4" fill="#5e5e5e" text-anchor="middle">-3.00/-1...</text>
<rect x="240.9" y="461.8" width="20.5" height="11.8" rx="2" fill="#f7f0b2"/>
<text x="251.1" y="480" font-family="Liberation Sans, sans-serif" font-size="4.4" fill="#5e5e5e" text-anchor="middle">-1.00/1.00</text>
<rect x="265.7" y="461.8" width="20.5" height="11.8" rx="2" fill="#d9eca2"/>
<text x="275.9" y="480" font-family="Liberation Sans, sans-serif" font-size="4.4" fill="#5e5e5e" text-anchor="middle">1.00/3.00</text>
<rect x="290.6" y="461.8" width="20.5" height="11.8" rx="2" fill="#a9db89"/>
<text x="300.8" y="480" font-family="Liberation Sans, sans-serif" font-size="4.4" fill="#5e5e5e" text-anchor="middle">3.00/5.00</text>
<rect x="315.4" y="461.8" width="20.5" height="11.8" rx="2" fill="#79c77a"/>
<text x="325.6" y="480" font-family="Liberation Sans, sans-serif" font-size="4.4" fill="#5e5e5e" text-anchor="middle">5.00/7.00</text>
<rect x="340.2" y="461.8" width="20.5" height="11.8" rx="2" fill="#40a95a"/>
<text x="350.4" y="480" font-family="Liberation Sans, sans-serif" font-size="4.4" fill="#5e5e5e" text-anchor="middle">7.00/10</text>
<rect x="365.1" y="461.8" width="20.5" height="11.8" rx="2" fill="#24894a"/>
<text x="375.3" y="480" font-family="Liberation Sans, sans-serif" font-size="4.4" fill="#5e5e5e" text-anchor="middle">10/20</text>
<rect x="389.9" y="461.8" width="20.5" height="11.8" rx="2" fill="#0d5e31"/>
<text x="400.1" y="480" font-family="Liberation Sans, sans-serif" font-size="4.4" fill="#5e5e5e" text-anchor="middle">20/30</text>
<rect x="414.7" y="461.8" width="20.5" height="11.8" rx="2" fill="#052b16"/>
<text x="424.9" y="480" font-family="Liberation Sans, sans-serif" font-size="4.4" fill="#5e5e5e" text-anchor="middle">> 30</text>
<rect x="35.4" y="476.4" width="77.6" height="9.6" fill="#fff" opacity="0.88"/>
<text x="37" y="484.2" font-family="Liberation Sans, sans-serif" font-size="7.2" fill="#5a5a5a">62.79211<tspan fill="#c8c8c8">40, 47.90</tspan></text>
<rect x="345" y="480.5" width="124" height="6.5" fill="#fff" opacity="0.6"/>
<text x="347.5" y="486.3" font-family="Liberation Sans, sans-serif" font-size="5.4" fill="#444">Imagerie ©2026 NASA  |  Conditions d'utilisation</text>
<circle cx="33.8" cy="466" r="6.6" fill="#fff"/><path d="M35 463.4 l2.6 2.6 l-2.6 2.6z" fill="#222"/>
</svg>
<div style="position:absolute;left:33.5px;top:34.7px;width:424.5px;height:51.1px;background:#fff"></div>
<div style="position:absolute;left:33.5px;top:34.7px;width:196px;height:15.3px;background:#000"></div>
<div class="th" style="left:36.5px;top:34.7px;height:15.3px;line-height:15.3px">Total Russia - Winter Wheat</div>
<div class="tl2" style="left:36.5px;top:50.8px;height:16.6px;line-height:16.6px">HISTO Production</div>
<div class="tl3" style="left:36.5px;top:66.6px;height:19.2px;line-height:19.2px">Var. 15Y trend</div>
<div style="position:absolute;left:33.5px;top:50.0px;width:424.5px;height:1px;background:#d8d8d8"></div>
<div style="position:absolute;left:33.5px;top:66.6px;width:424.5px;height:1px;background:#d8d8d8"></div>
<div style="position:absolute;left:229.5px;top:50.0px;width:45.5px;height:16.6px;background:#ffa300"></div>
<div class="ty" style="left:229.5px;width:45.5px;top:34.7px;height:15.3px;line-height:16.3px">2021</div>
<div class="tv" style="left:229.5px;width:45.5px;top:50.5px;height:16.6px;line-height:17.6px">52,19</div>
<div class="tp" style="left:229.5px;width:45.5px;top:66.6px;height:19.2px;line-height:20.2px">-10%</div>
<div style="position:absolute;left:275.0px;top:50.0px;width:45.5px;height:16.6px;background:#12ec12"></div>
<div style="position:absolute;left:275.0px;top:34.7px;width:1px;height:15.3px;background:#dcdcdc"></div>
<div style="position:absolute;left:275.0px;top:66.6px;width:1px;height:19.2px;background:#dcdcdc"></div>
<div class="ty" style="left:275.0px;width:45.5px;top:34.7px;height:15.3px;line-height:16.3px">2022</div>
<div class="tv" style="left:275.0px;width:45.5px;top:50.5px;height:16.6px;line-height:17.6px">68,00</div>
<div class="tp" style="left:275.0px;width:45.5px;top:66.6px;height:19.2px;line-height:20.2px">13%</div>
<div style="position:absolute;left:320.5px;top:50.0px;width:45.5px;height:16.6px;background:#ffff00"></div>
<div style="position:absolute;left:320.5px;top:34.7px;width:1px;height:15.3px;background:#dcdcdc"></div>
<div style="position:absolute;left:320.5px;top:66.6px;width:1px;height:19.2px;background:#dcdcdc"></div>
<div class="ty" style="left:320.5px;width:45.5px;top:34.7px;height:15.3px;line-height:16.3px">2023</div>
<div class="tv" style="left:320.5px;width:45.5px;top:50.5px;height:16.6px;line-height:17.6px">64,00</div>
<div class="tp" style="left:320.5px;width:45.5px;top:66.6px;height:19.2px;line-height:20.2px">2%</div>
<div style="position:absolute;left:366.0px;top:50.0px;width:45.30000000000001px;height:16.6px;background:#ffa800"></div>
<div style="position:absolute;left:366.0px;top:34.7px;width:1px;height:15.3px;background:#dcdcdc"></div>
<div style="position:absolute;left:366.0px;top:66.6px;width:1px;height:19.2px;background:#dcdcdc"></div>
<div class="ty" style="left:366.0px;width:45.30000000000001px;top:34.7px;height:15.3px;line-height:16.3px">2024</div>
<div class="tv" style="left:366.0px;width:45.30000000000001px;top:50.5px;height:16.6px;line-height:17.6px">55,80</div>
<div class="tp" style="left:366.0px;width:45.30000000000001px;top:66.6px;height:19.2px;line-height:20.2px">-14%</div>
<div style="position:absolute;left:411.3px;top:50.0px;width:46.19999999999999px;height:16.6px;background:#ffea00"></div>
<div style="position:absolute;left:411.3px;top:34.7px;width:1px;height:15.3px;background:#dcdcdc"></div>
<div style="position:absolute;left:411.3px;top:66.6px;width:1px;height:19.2px;background:#dcdcdc"></div>
<div class="ty" style="left:411.3px;width:46.19999999999999px;top:34.7px;height:15.3px;line-height:16.3px">2025</div>
<div class="tv" style="left:411.3px;width:46.19999999999999px;top:50.5px;height:16.6px;line-height:17.6px">63,00</div>
<div class="tp" style="left:411.3px;width:46.19999999999999px;top:66.6px;height:19.2px;line-height:20.2px">-7%</div>
<div style="position:absolute;left:33.5px;top:88.5px;width:424.5px;height:51.300000000000004px;background:#fff"></div>
<div style="position:absolute;left:33.5px;top:88.5px;width:196px;height:15.4px;background:#000"></div>
<div class="th" style="left:36.5px;top:88.5px;height:15.4px;line-height:15.4px">Total Russia - Winter Wheat</div>
<div class="tl2" style="left:36.5px;top:104.7px;height:16.8px;line-height:16.8px">HISTO Yield</div>
<div class="tl3" style="left:36.5px;top:120.7px;height:19.1px;line-height:19.1px">Var. 15Y trend</div>
<div style="position:absolute;left:33.5px;top:103.9px;width:424.5px;height:1px;background:#d8d8d8"></div>
<div style="position:absolute;left:33.5px;top:120.7px;width:424.5px;height:1px;background:#d8d8d8"></div>
<div style="position:absolute;left:229.5px;top:103.9px;width:45.5px;height:16.8px;background:#ff9a00"></div>
<div class="ty" style="left:229.5px;width:45.5px;top:88.5px;height:15.4px;line-height:16.4px">2021</div>
<div class="tv" style="left:229.5px;width:45.5px;top:104.4px;height:16.8px;line-height:17.8px">3,43</div>
<div class="tp" style="left:229.5px;width:45.5px;top:120.7px;height:19.1px;line-height:20.1px">-10%</div>
<div style="position:absolute;left:275.0px;top:103.9px;width:45.5px;height:16.8px;background:#ffff00"></div>
<div style="position:absolute;left:275.0px;top:88.5px;width:1px;height:15.4px;background:#dcdcdc"></div>
<div style="position:absolute;left:275.0px;top:120.7px;width:1px;height:19.1px;background:#dcdcdc"></div>
<div class="ty" style="left:275.0px;width:45.5px;top:88.5px;height:15.4px;line-height:16.4px">2022</div>
<div class="tv" style="left:275.0px;width:45.5px;top:104.4px;height:16.8px;line-height:17.8px">4,17</div>
<div class="tp" style="left:275.0px;width:45.5px;top:120.7px;height:19.1px;line-height:20.1px">8%</div>
<div style="position:absolute;left:320.5px;top:103.9px;width:45.5px;height:16.8px;background:#ffff00"></div>
<div style="position:absolute;left:320.5px;top:88.5px;width:1px;height:15.4px;background:#dcdcdc"></div>
<div style="position:absolute;left:320.5px;top:120.7px;width:1px;height:19.1px;background:#dcdcdc"></div>
<div class="ty" style="left:320.5px;width:45.5px;top:88.5px;height:15.4px;line-height:16.4px">2023</div>
<div class="tv" style="left:320.5px;width:45.5px;top:104.4px;height:16.8px;line-height:17.8px">4,19</div>
<div class="tp" style="left:320.5px;width:45.5px;top:120.7px;height:19.1px;line-height:20.1px">6%</div>
<div style="position:absolute;left:366.0px;top:103.9px;width:45.30000000000001px;height:16.8px;background:#ff9f00"></div>
<div style="position:absolute;left:366.0px;top:88.5px;width:1px;height:15.4px;background:#dcdcdc"></div>
<div style="position:absolute;left:366.0px;top:120.7px;width:1px;height:19.1px;background:#dcdcdc"></div>
<div class="ty" style="left:366.0px;width:45.30000000000001px;top:88.5px;height:15.4px;line-height:16.4px">2024</div>
<div class="tv" style="left:366.0px;width:45.30000000000001px;top:104.4px;height:16.8px;line-height:17.8px">3,55</div>
<div class="tp" style="left:366.0px;width:45.30000000000001px;top:120.7px;height:19.1px;line-height:20.1px">-12%</div>
<div style="position:absolute;left:411.3px;top:103.9px;width:46.19999999999999px;height:16.8px;background:#ffea00"></div>
<div style="position:absolute;left:411.3px;top:88.5px;width:1px;height:15.4px;background:#dcdcdc"></div>
<div style="position:absolute;left:411.3px;top:120.7px;width:1px;height:19.1px;background:#dcdcdc"></div>
<div class="ty" style="left:411.3px;width:46.19999999999999px;top:88.5px;height:15.4px;line-height:16.4px">2025</div>
<div class="tv" style="left:411.3px;width:46.19999999999999px;top:104.4px;height:16.8px;line-height:17.8px">4,06</div>
<div class="tp" style="left:411.3px;width:46.19999999999999px;top:120.7px;height:19.1px;line-height:20.1px">-1%</div>
<div style="position:absolute;left:33.4px;top:154.7px;width:122px;height:52px;background:#fff"></div><div style="position:absolute;left:33.4px;top:155.3px;width:122px;text-align:center;font:18.9px 'Liberation Sans', sans-serif;color:#111;line-height:24px;white-space:nowrap">March 01-09</div><div style="position:absolute;left:33.4px;top:179.6px;width:122px;text-align:center;font:17.9px 'Liberation Sans', sans-serif;color:#111;line-height:24px;white-space:nowrap">NDVI - % CTA</div>
<div style="position:absolute;left:469px;top:34.5px;width:435px;height:452.5px;background:#fff"></div>
<div class="sm" style="left:476px;top:38.6px;font-size:6.5px;color:#555">Russia &gt; Southern Federal District</div>
<div class="sm" style="left:476px;top:48.9px;font-size:7.5px;color:#444">1st February</div>
<div class="sm" style="left:799.5px;top:48.9px;font-size:7.65px;color:#444">31st May</div>
<svg style="position:absolute;left:523.2px;top:49px" width="10" height="10" viewBox="0 0 10 10"><rect x="0.8" y="1.6" width="8.4" height="7.6" fill="none" stroke="#222" stroke-width="1.1"/><rect x="0.8" y="1.6" width="8.4" height="2" fill="#222"/><rect x="2.2" y="0.2" width="1" height="1.8" fill="#222"/><rect x="6.8" y="0.2" width="1" height="1.8" fill="#222"/><rect x="2.3" y="5.3" width="1.6" height="1.6" fill="#222"/></svg>
<svg style="position:absolute;left:834.4px;top:49px" width="10" height="10" viewBox="0 0 10 10"><rect x="0.8" y="1.6" width="8.4" height="7.6" fill="none" stroke="#222" stroke-width="1.1"/><rect x="0.8" y="1.6" width="8.4" height="2" fill="#222"/><rect x="2.2" y="0.2" width="1" height="1.8" fill="#222"/><rect x="6.8" y="0.2" width="1" height="1.8" fill="#222"/><rect x="2.3" y="5.3" width="1.6" height="1.6" fill="#222"/></svg>
<div style="position:absolute;left:476px;top:63px;width:369px;height:1.5px;background:#c9ced4"></div>
<div style="position:absolute;left:476px;top:60.5px;width:1px;height:6px;background:#555"></div>
<div style="position:absolute;left:844.5px;top:60.5px;width:1px;height:6px;background:#555"></div>
<svg style="position:absolute;left:475px;top:72px" width="10" height="13" viewBox="0 0 10 13"><circle cx="3.9" cy="8.1" r="3.8" fill="#9a9a9a"/><path d="M0.6 7.3h6.6M0.8 9.2h6.2" stroke="#d0d0d0" stroke-width="0.7"/><circle cx="5.1" cy="3" r="1.9" fill="#eee" stroke="#555" stroke-width="1.1"/><path d="M4 4.6 L5.1 6 L6.2 4.6z" fill="#222"/></svg>
<div class="sm" style="left:488.8px;top:72.5px;font-size:7.25px;color:#333;font-weight:bold">Vegetation index</div>
<svg style="position:absolute;left:810px;top:73px" width="30" height="9" viewBox="0 0 30 9"><path d="M2 6 L5 3 L8 6" fill="none" stroke="#333" stroke-width="1.2"/><path d="M21 1 L28 8 M28 1 L21 8" stroke="#333" stroke-width="1.2"/></svg>
<div style="position:absolute;left:848.7px;top:71.2px;width:51.3px;height:12.8px;background:#7d8d9c;border-radius:2px;color:#e6eaee;font:bold 7.4px 'Liberation Sans', sans-serif;letter-spacing:0.5px;text-align:center;line-height:13px">Reset</div>
<div style="position:absolute;left:848.7px;top:87px;width:51px;height:1px;background:#eee"></div>
<div class="sm" style="left:848.7px;top:89.2px;font-size:7px;color:#333;font-weight:bold;line-height:7.2px">Historical<br>Average</div>
<div style="position:absolute;left:848.7px;top:108.6px;width:51.3px;height:9.1px;background:#d0d0d0;border-radius:2.5px;color:#fff;font:italic 7.3px 'Liberation Sans', sans-serif;text-align:center;line-height:9.8px">Average</div>
<div style="position:absolute;left:848.7px;top:119.3px;width:51.3px;height:9.1px;background:#232323;border-radius:2.5px;color:#fff;font:7.3px 'Liberation Sans', sans-serif;text-align:center;line-height:9.8px">2026</div>
<div style="position:absolute;left:848.7px;top:130.0px;width:51.3px;height:9.1px;background:#e33c2f;border-radius:2.5px;color:#fff;font:7.3px 'Liberation Sans', sans-serif;text-align:center;line-height:9.8px">2025</div>
<div style="position:absolute;left:848.7px;top:140.7px;width:51.3px;height:9.1px;background:#149a3f;border-radius:2.5px;color:#fff;font:7.3px 'Liberation Sans', sans-serif;text-align:center;line-height:9.8px">2024</div>
<div style="position:absolute;left:848.7px;top:151.4px;width:51.3px;height:9.1px;background:#f6c94b;border-radius:2.5px;color:#fff;font:7.3px 'Liberation Sans', sans-serif;text-align:center;line-height:9.8px">2023</div>
<div style="position:absolute;left:848.7px;top:162.1px;width:51.3px;height:9.1px;background:#1558c9;border-radius:2.5px;color:#fff;font:7.3px 'Liberation Sans', sans-serif;text-align:center;line-height:9.8px">2022</div>
<div style="position:absolute;left:848.7px;width:51.3px;top:173.0px;height:10px;line-height:10px;text-align:center;font:7px 'Liberation Sans', sans-serif;color:#444">2021</div>
<div style="position:absolute;left:848.7px;width:51.3px;top:183.7px;height:10px;line-height:10px;text-align:center;font:7px 'Liberation Sans', sans-serif;color:#444">2020</div>
<div style="position:absolute;left:848.7px;width:51.3px;top:194.4px;height:10px;line-height:10px;text-align:center;font:7px 'Liberation Sans', sans-serif;color:#444">2019</div>
<div style="position:absolute;left:848.7px;width:51.3px;top:205.1px;height:10px;line-height:10px;text-align:center;font:7px 'Liberation Sans', sans-serif;color:#444">2018</div>
<div style="position:absolute;left:848.7px;width:51.3px;top:215.8px;height:10px;line-height:10px;text-align:center;font:7px 'Liberation Sans', sans-serif;color:#444">2017</div>
<div style="position:absolute;left:848.7px;width:51.3px;top:226.5px;height:10px;line-height:10px;text-align:center;font:7px 'Liberation Sans', sans-serif;color:#444">2016</div>
<div style="position:absolute;left:848.7px;width:51.3px;top:237.2px;height:10px;line-height:10px;text-align:center;font:7px 'Liberation Sans', sans-serif;color:#444">2015</div>
<div style="position:absolute;left:848.7px;width:51.3px;top:247.9px;height:10px;line-height:10px;text-align:center;font:7px 'Liberation Sans', sans-serif;color:#444">2014</div>
<div style="position:absolute;left:848.7px;width:51.3px;top:258.6px;height:10px;line-height:10px;text-align:center;font:7px 'Liberation Sans', sans-serif;color:#444">2013</div>
<div style="position:absolute;left:848.7px;width:51.3px;top:269.3px;height:10px;line-height:10px;text-align:center;font:7px 'Liberation Sans', sans-serif;color:#444">2012</div>
<div style="position:absolute;left:848.7px;width:51.3px;top:280.0px;height:10px;line-height:10px;text-align:center;font:7px 'Liberation Sans', sans-serif;color:#444">2011</div>
<div style="position:absolute;left:848.7px;width:51.3px;top:290.7px;height:10px;line-height:10px;text-align:center;font:7px 'Liberation Sans', sans-serif;color:#444">2010</div>
<div style="position:absolute;left:848.7px;width:51.3px;top:301.4px;height:10px;line-height:10px;text-align:center;font:7px 'Liberation Sans', sans-serif;color:#444">2009</div>
<div style="position:absolute;left:848.7px;width:51.3px;top:312.1px;height:10px;line-height:10px;text-align:center;font:7px 'Liberation Sans', sans-serif;color:#444">2008</div>
<div style="position:absolute;left:848.7px;width:51.3px;top:322.8px;height:10px;line-height:10px;text-align:center;font:7px 'Liberation Sans', sans-serif;color:#444">2007</div>
<div style="position:absolute;left:848.7px;width:51.3px;top:333.5px;height:10px;line-height:10px;text-align:center;font:7px 'Liberation Sans', sans-serif;color:#444">2006</div>
<div style="position:absolute;left:849px;top:467.6px;width:51px;height:16.4px;background:#47c489;border-radius:2px;color:#eef;font:bold 7.4px 'Liberation Sans', sans-serif;letter-spacing:0.6px;text-align:center;line-height:15.4px">ADD</div>
<svg style="position:absolute;left:0;top:0" width="936" height="524" viewBox="0 0 936 524" font-family="Liberation Sans, sans-serif"><line x1="487" y1="92.2" x2="840" y2="92.2" stroke="#f0f0f0" stroke-width="1"/>
<text x="474" y="92.5" font-size="6.7" fill="#6a6a6a">0.8</text>
<line x1="487" y1="118.7" x2="840" y2="118.7" stroke="#f0f0f0" stroke-width="1"/>
<text x="474" y="119.0" font-size="6.7" fill="#6a6a6a">0.75</text>
<line x1="487" y1="145.2" x2="840" y2="145.2" stroke="#f0f0f0" stroke-width="1"/>
<text x="474" y="145.5" font-size="6.7" fill="#6a6a6a">0.7</text>
<line x1="487" y1="171.7" x2="840" y2="171.7" stroke="#f0f0f0" stroke-width="1"/>
<text x="474" y="172.0" font-size="6.7" fill="#6a6a6a">0.65</text>
<line x1="487" y1="198.2" x2="840" y2="198.2" stroke="#f0f0f0" stroke-width="1"/>
<text x="474" y="198.5" font-size="6.7" fill="#6a6a6a">0.6</text>
<line x1="487" y1="224.7" x2="840" y2="224.7" stroke="#f0f0f0" stroke-width="1"/>
<text x="474" y="225.0" font-size="6.7" fill="#6a6a6a">0.55</text>
<line x1="487" y1="251.2" x2="840" y2="251.2" stroke="#f0f0f0" stroke-width="1"/>
<text x="474" y="251.5" font-size="6.7" fill="#6a6a6a">0.5</text>
<line x1="487" y1="277.7" x2="840" y2="277.7" stroke="#f0f0f0" stroke-width="1"/>
<text x="474" y="278.0" font-size="6.7" fill="#6a6a6a">0.45</text>
<line x1="487" y1="304.3" x2="840" y2="304.3" stroke="#f0f0f0" stroke-width="1"/>
<text x="474" y="304.6" font-size="6.7" fill="#6a6a6a">0.4</text>
<line x1="487" y1="330.8" x2="840" y2="330.8" stroke="#f0f0f0" stroke-width="1"/>
<text x="474" y="331.1" font-size="6.7" fill="#6a6a6a">0.35</text>
<line x1="487" y1="357.3" x2="840" y2="357.3" stroke="#f0f0f0" stroke-width="1"/>
<text x="474" y="357.6" font-size="6.7" fill="#6a6a6a">0.3</text>
<line x1="487" y1="383.8" x2="840" y2="383.8" stroke="#f0f0f0" stroke-width="1"/>
<text x="474" y="384.1" font-size="6.7" fill="#6a6a6a">0.25</text>
<line x1="487" y1="410.3" x2="840" y2="410.3" stroke="#f0f0f0" stroke-width="1"/>
<text x="474" y="410.6" font-size="6.7" fill="#6a6a6a">0.2</text>
<line x1="487" y1="436.8" x2="840" y2="436.8" stroke="#f0f0f0" stroke-width="1"/>
<text x="474" y="437.1" font-size="6.7" fill="#6a6a6a">0.15</text>
<text x="474" y="463.6" font-size="6.7" fill="#6a6a6a">0.1</text>
<line x1="486.5" y1="463.3" x2="839.5" y2="463.3" stroke="#666" stroke-width="0.9"/>
<line x1="513.1" y1="463.3" x2="513.1" y2="466.5" stroke="#666" stroke-width="0.9"/>
<text x="513.1" y="477" font-size="6.8" fill="#555" text-anchor="middle">10 Feb</text>
<line x1="554.3" y1="463.3" x2="554.3" y2="466.5" stroke="#666" stroke-width="0.9"/>
<text x="554.3" y="477" font-size="6.8" fill="#555" text-anchor="middle">24 Feb</text>
<line x1="595.5" y1="463.3" x2="595.5" y2="466.5" stroke="#666" stroke-width="0.9"/>
<text x="595.5" y="477" font-size="6.8" fill="#555" text-anchor="middle">9 Mar</text>
<line x1="636.7" y1="463.3" x2="636.7" y2="466.5" stroke="#666" stroke-width="0.9"/>
<text x="636.7" y="477" font-size="6.8" fill="#555" text-anchor="middle">23 Mar</text>
<line x1="677.9" y1="463.3" x2="677.9" y2="466.5" stroke="#666" stroke-width="0.9"/>
<text x="677.9" y="477" font-size="6.8" fill="#555" text-anchor="middle">6 Apr</text>
<line x1="719.1" y1="463.3" x2="719.1" y2="466.5" stroke="#666" stroke-width="0.9"/>
<text x="719.1" y="477" font-size="6.8" fill="#555" text-anchor="middle">20 Apr</text>
<line x1="760.3" y1="463.3" x2="760.3" y2="466.5" stroke="#666" stroke-width="0.9"/>
<text x="760.3" y="477" font-size="6.8" fill="#555" text-anchor="middle">4 May</text>
<line x1="801.5" y1="463.3" x2="801.5" y2="466.5" stroke="#666" stroke-width="0.9"/>
<text x="801.5" y="477" font-size="6.8" fill="#555" text-anchor="middle">18 May</text><path d="M488.3,438.2 L490.9,437.0 L493.4,435.8 L496.0,434.6 L498.6,433.4 L501.2,432.2 L503.8,431.0 L506.4,429.7 L509.0,428.5 L511.6,427.2 L514.2,426.0 L516.8,424.7 L519.5,423.4 L522.1,422.1 L524.7,420.9 L527.4,419.6 L530.0,418.3 L532.6,417.0 L535.3,415.7 L538.0,414.4 L540.6,413.1 L543.3,411.8 L546.0,410.5 L548.6,409.2 L551.3,407.9 L554.0,406.6 L556.7,405.3 L559.4,404.0 L562.2,402.7 L564.9,401.4 L567.6,400.1 L570.3,398.8 L573.1,397.5 L575.8,396.2 L578.6,394.9 L581.3,393.5 L584.0,392.2 L586.8,390.9 L589.5,389.5 L592.2,388.2 L594.9,386.8 L597.6,385.5 L600.3,384.1 L603.0,382.7 L605.7,381.3 L608.3,379.8 L611.0,378.4 L613.6,376.9 L616.2,375.4 L618.8,373.9 L621.4,372.4 L623.9,370.8 L626.5,369.3 L629.0,367.7 L631.4,366.0 L633.9,364.4 L636.3,362.7 L638.7,361.0 L641.0,359.2 L643.4,357.5 L645.7,355.7 L647.9,353.8 L650.2,352.0 L652.4,350.1 L654.5,348.1 L656.7,346.2 L658.8,344.2 L660.9,342.2 L662.9,340.2 L665.0,338.1 L667.0,336.0 L669.0,333.9 L670.9,331.8 L672.9,329.6 L674.8,327.4 L676.7,325.2 L678.6,323.0 L680.4,320.8 L682.3,318.5 L684.1,316.2 L685.9,313.9 L687.7,311.6 L689.4,309.3 L691.2,306.9 L692.9,304.5 L694.6,302.1 L696.3,299.7 L698.0,297.3 L699.7,294.9 L701.4,292.4 L703.0,290.0 L704.7,287.5 L706.3,285.0 L707.9,282.5 L709.6,280.0 L711.2,277.5 L712.8,275.0 L714.4,272.5 L716.0,270.0 L717.6,267.4 L719.2,264.9 L720.7,262.3 L722.3,259.8 L723.9,257.2 L725.5,254.7 L727.1,252.1 L728.6,249.5 L730.2,247.0 L731.8,244.4 L733.4,241.8 L735.0,239.2 L736.6,236.7 L738.2,234.1 L739.8,231.5 L741.4,229.0 L743.0,226.4 L744.6,223.9 L746.3,221.3 L747.9,218.8 L749.6,216.2 L751.2,213.7 L752.9,211.2 L754.6,208.7 L756.3,206.2 L758.0,203.7 L759.8,201.3 L761.5,198.9 L763.3,196.5 L765.1,194.1 L767.0,191.8 L768.8,189.5 L770.7,187.2 L772.6,184.9 L774.6,182.7 L776.5,180.6 L778.5,178.5 L780.6,176.4 L782.7,174.4 L784.8,172.4 L786.9,170.5 L789.1,168.6 L791.3,166.8 L793.6,165.1 L795.9,163.4 L798.3,161.7 L800.7,160.2 L803.1,158.7 L805.6,157.3 L808.2,155.9 L810.8,154.6 L813.5,153.4 L816.2,152.3 L818.9,151.3 L821.8,150.3 L824.7,149.4 L827.6,148.7 L830.6,148.0 L833.7,147.4 L836.8,146.9 L840.0,146.5" fill="none" stroke="#cccccc" stroke-width="1.2" stroke-dasharray="4 3.5"/>
<path d="M487.7,387.2 L490.3,388.5 L493.0,389.6 L495.7,390.8 L498.5,391.8 L501.3,392.8 L504.2,393.8 L507.1,394.6 L510.0,395.4 L513.0,396.1 L516.0,396.8 L519.1,397.4 L522.2,397.9 L525.3,398.4 L528.4,398.8 L531.5,399.1 L534.6,399.3 L537.8,399.5 L541.0,399.6 L544.1,399.7 L547.3,399.6 L550.4,399.5 L553.6,399.4 L556.8,399.1 L559.9,398.8 L563.0,398.4 L566.1,397.9 L569.2,397.4 L572.3,396.8 L575.3,396.1 L578.3,395.3 L581.3,394.5 L584.2,393.6 L587.1,392.6 L590.0,391.5 L592.8,390.4 L595.5,389.2 L598.3,387.9 L600.9,386.5 L603.6,385.1 L606.1,383.6 L608.7,382.0 L611.2,380.4 L613.6,378.7 L616.1,376.9 L618.4,375.1 L620.7,373.2 L623.0,371.3 L625.3,369.3 L627.5,367.2 L629.7,365.1 L631.8,363.0 L633.9,360.8 L636.0,358.5 L638.0,356.2 L640.0,353.9 L641.9,351.5 L643.8,349.1 L645.7,346.6 L647.6,344.2 L649.4,341.6 L651.2,339.1 L652.9,336.5 L654.7,333.9 L656.4,331.2 L658.0,328.6 L659.7,325.9 L661.3,323.2 L662.9,320.4 L664.4,317.7 L665.9,314.9 L667.4,312.1 L668.9,309.3 L670.4,306.5 L671.8,303.7 L673.2,300.8 L674.6,298.0 L675.9,295.2 L677.3,292.3 L678.6,289.5 L679.9,286.6 L681.1,283.8 L682.4,280.9 L683.6,278.1 L684.8,275.3 L686.0,272.4 L687.2,269.6 L688.4,266.8 L689.6,264.0 L690.7,261.2 L691.9,258.5 L693.1,255.7 L694.3,252.9 L695.5,250.2 L696.7,247.5 L698.0,244.7 L699.2,242.0 L700.5,239.3 L701.8,236.6 L703.2,233.9 L704.6,231.2 L706.1,228.6 L707.6,225.9 L709.1,223.3 L710.7,220.6 L712.4,218.0 L714.1,215.4 L715.8,212.8 L717.6,210.2 L719.4,207.7 L721.3,205.1 L723.1,202.6 L725.0,200.0 L726.9,197.5 L728.8,195.0 L730.7,192.5 L732.6,190.0 L734.5,187.6 L736.5,185.2 L738.5,182.9 L740.5,180.7 L742.6,178.5 L744.7,176.4 L746.9,174.4 L749.2,172.5 L751.5,170.7 L753.9,169.0 L756.4,167.4 L759.0,166.0 L761.7,164.7 L764.5,163.5 L767.3,162.4 L770.2,161.3 L773.1,160.2 L776.0,158.9 L779.0,157.6 L782.0,156.2 L784.9,154.7 L787.8,153.2 L790.8,151.8 L793.7,150.4 L796.6,149.2 L799.5,148.1 L802.3,147.2 L805.2,146.5 L808.0,146.1 L810.7,145.9 L813.4,146.2 L816.1,146.8 L818.7,147.8 L821.2,149.3 L823.7,151.2 L826.1,153.4 L828.5,155.9 L830.7,158.5 L832.8,161.2 L834.7,163.9 L836.5,166.4 L838.2,168.8 L839.7,170.9" fill="none" stroke="#e84d43" stroke-width="1.3"/>
<path d="M487.1,319.2 L490.0,320.1 L492.9,321.0 L495.7,322.0 L498.6,322.9 L501.4,323.7 L504.1,324.6 L506.9,325.5 L509.6,326.3 L512.3,327.2 L515.0,328.0 L517.7,328.8 L520.3,329.6 L523.0,330.5 L525.6,331.3 L528.3,332.1 L530.9,332.9 L533.6,333.7 L536.2,334.4 L538.9,335.2 L541.6,336.0 L544.3,336.8 L547.0,337.6 L549.7,338.4 L552.5,339.2 L555.3,340.1 L558.1,340.9 L560.9,341.7 L563.8,342.5 L566.7,343.4 L569.7,344.2 L572.7,345.0 L575.7,345.8 L578.7,346.6 L581.7,347.3 L584.7,348.0 L587.7,348.6 L590.7,349.1 L593.6,349.5 L596.6,349.8 L599.5,350.1 L602.4,350.1 L605.2,350.1 L608.0,349.9 L610.7,349.6 L613.4,349.1 L616.0,348.5 L618.6,347.7 L621.1,346.9 L623.6,345.9 L626.1,344.7 L628.4,343.5 L630.8,342.1 L633.1,340.7 L635.3,339.1 L637.5,337.5 L639.7,335.7 L641.8,333.9 L643.8,331.9 L645.9,329.9 L647.8,327.8 L649.8,325.7 L651.7,323.5 L653.5,321.2 L655.4,318.8 L657.2,316.5 L658.9,314.0 L660.6,311.5 L662.3,309.0 L663.9,306.5 L665.5,303.9 L667.1,301.3 L668.6,298.6 L670.1,296.0 L671.6,293.3 L673.0,290.7 L674.5,288.0 L675.8,285.3 L677.2,282.7 L678.5,280.0 L679.8,277.4 L681.1,274.8 L682.3,272.2 L683.5,269.6 L684.7,267.0 L685.9,264.4 L687.1,261.9 L688.3,259.3 L689.5,256.8 L690.7,254.3 L691.9,251.8 L693.1,249.3 L694.3,246.8 L695.5,244.3 L696.7,241.8 L698.0,239.4 L699.3,236.9 L700.6,234.4 L701.9,232.0 L703.3,229.5 L704.7,227.0 L706.2,224.6 L707.7,222.1 L709.2,219.7 L710.8,217.2 L712.4,214.7 L714.1,212.3 L715.8,209.8 L717.5,207.4 L719.3,204.9 L721.0,202.5 L722.8,200.1 L724.6,197.7 L726.3,195.3 L728.1,193.0 L729.9,190.7 L731.7,188.4 L733.5,186.1 L735.3,183.9 L737.2,181.7 L739.1,179.6 L741.0,177.5 L742.9,175.5 L744.9,173.6 L747.0,171.7 L749.1,169.9 L751.3,168.2 L753.5,166.5 L755.8,165.0 L758.2,163.5 L760.6,162.1 L763.1,160.9 L765.7,159.7 L768.4,158.6 L771.1,157.5 L773.8,156.5 L776.6,155.6 L779.4,154.6 L782.3,153.7 L785.1,152.8 L788.0,152.0 L790.8,151.3 L793.7,150.6 L796.6,150.0 L799.5,149.5 L802.4,149.1 L805.2,148.9 L808.1,148.7 L810.9,148.6 L813.7,148.7 L816.5,149.0 L819.2,149.3 L822.0,149.9 L824.6,150.6 L827.3,151.5 L829.9,152.6 L832.4,153.9 L834.9,155.4 L837.3,157.1 L839.7,159.0" fill="none" stroke="#249c52" stroke-width="1.3"/>
<path d="M486.7,370.1 L489.7,370.5 L492.7,370.9 L495.7,371.3 L498.7,371.6 L501.7,371.9 L504.8,372.2 L507.8,372.4 L510.8,372.5 L513.9,372.6 L516.9,372.7 L519.9,372.7 L523.0,372.7 L526.0,372.7 L529.0,372.6 L532.0,372.4 L535.0,372.2 L538.0,371.9 L541.0,371.6 L544.0,371.3 L546.9,370.9 L549.9,370.4 L552.8,369.9 L555.7,369.4 L558.6,368.8 L561.4,368.1 L564.3,367.4 L567.1,366.7 L569.9,365.9 L572.6,365.0 L575.4,364.1 L578.1,363.1 L580.8,362.1 L583.4,361.0 L586.0,359.8 L588.6,358.6 L591.1,357.3 L593.6,356.0 L596.1,354.6 L598.5,353.2 L600.9,351.7 L603.3,350.2 L605.6,348.6 L607.9,347.0 L610.2,345.3 L612.4,343.5 L614.6,341.7 L616.8,339.9 L619.0,338.0 L621.1,336.1 L623.2,334.2 L625.2,332.2 L627.3,330.1 L629.3,328.1 L631.3,326.0 L633.2,323.8 L635.2,321.6 L637.1,319.4 L639.0,317.2 L640.9,314.9 L642.7,312.6 L644.5,310.3 L646.3,307.9 L648.1,305.6 L649.9,303.1 L651.7,300.7 L653.4,298.3 L655.1,295.8 L656.8,293.3 L658.5,290.8 L660.2,288.3 L661.9,285.8 L663.5,283.2 L665.2,280.6 L666.8,278.1 L668.4,275.5 L670.0,272.9 L671.6,270.3 L673.2,267.7 L674.8,265.1 L676.4,262.5 L677.9,259.8 L679.5,257.2 L681.0,254.6 L682.6,252.0 L684.1,249.4 L685.7,246.7 L687.2,244.1 L688.8,241.5 L690.3,238.9 L691.8,236.3 L693.4,233.7 L694.9,231.1 L696.4,228.6 L698.0,226.0 L699.5,223.4 L701.1,220.9 L702.6,218.3 L704.2,215.8 L705.8,213.3 L707.3,210.8 L708.9,208.3 L710.5,205.8 L712.1,203.3 L713.7,200.8 L715.4,198.4 L717.0,195.9 L718.7,193.5 L720.3,191.1 L722.0,188.7 L723.7,186.4 L725.4,184.0 L727.2,181.7 L728.9,179.3 L730.7,177.0 L732.5,174.8 L734.3,172.5 L736.1,170.3 L738.0,168.1 L739.9,165.9 L741.8,163.7 L743.7,161.5 L745.6,159.4 L747.6,157.3 L749.6,155.2 L751.6,153.2 L753.7,151.2 L755.8,149.2 L757.9,147.2 L760.1,145.2 L762.2,143.3 L764.5,141.5 L766.7,139.6 L769.0,137.8 L771.3,136.0 L773.6,134.3 L776.0,132.6 L778.4,130.9 L780.9,129.3 L783.4,127.8 L785.9,126.3 L788.4,124.8 L791.0,123.4 L793.6,122.1 L796.3,120.9 L799.0,119.7 L801.7,118.5 L804.4,117.5 L807.2,116.5 L810.1,115.6 L812.9,114.7 L815.8,114.0 L818.7,113.3 L821.7,112.7 L824.7,112.2 L827.8,111.8 L830.9,111.5 L834.0,111.3 L837.1,111.2 L840.3,111.2" fill="none" stroke="#f6cd4c" stroke-width="1.3"/>
<path d="M487.1,331.1 L490.1,331.8 L493.0,332.4 L496.0,332.9 L499.0,333.3 L502.0,333.5 L505.0,333.7 L508.0,333.7 L511.1,333.6 L514.1,333.5 L517.2,333.3 L520.3,333.0 L523.4,332.7 L526.4,332.3 L529.5,331.9 L532.6,331.5 L535.7,331.1 L538.7,330.7 L541.8,330.2 L544.8,329.8 L547.9,329.5 L550.9,329.1 L553.9,328.8 L556.9,328.6 L559.8,328.4 L562.8,328.4 L565.7,328.4 L568.6,328.4 L571.5,328.6 L574.4,328.9 L577.2,329.2 L580.1,329.7 L582.9,330.2 L585.8,330.8 L588.6,331.5 L591.5,332.3 L594.4,333.1 L597.3,334.1 L600.2,335.1 L603.2,336.2 L606.2,337.4 L609.2,338.7 L612.2,340.0 L615.3,341.3 L618.3,342.5 L621.4,343.8 L624.4,344.9 L627.4,345.9 L630.3,346.7 L633.2,347.3 L636.0,347.8 L638.7,347.9 L641.4,347.8 L643.9,347.3 L646.4,346.6 L648.8,345.6 L651.1,344.3 L653.3,342.9 L655.4,341.2 L657.5,339.3 L659.5,337.3 L661.4,335.2 L663.3,332.9 L665.2,330.6 L667.0,328.2 L668.8,325.7 L670.5,323.3 L672.2,320.8 L673.9,318.2 L675.6,315.7 L677.2,313.1 L678.8,310.5 L680.3,307.9 L681.9,305.3 L683.4,302.6 L684.9,300.0 L686.4,297.3 L687.8,294.6 L689.2,291.9 L690.6,289.1 L692.0,286.4 L693.4,283.6 L694.7,280.8 L696.1,278.1 L697.4,275.3 L698.7,272.5 L700.0,269.7 L701.3,266.8 L702.6,264.0 L703.9,261.2 L705.2,258.4 L706.4,255.5 L707.7,252.7 L708.9,249.9 L710.2,247.0 L711.5,244.2 L712.7,241.4 L714.0,238.6 L715.2,235.7 L716.5,232.9 L717.8,230.1 L719.0,227.3 L720.3,224.5 L721.6,221.7 L722.9,219.0 L724.2,216.2 L725.5,213.5 L726.9,210.7 L728.2,208.0 L729.6,205.3 L730.9,202.6 L732.3,200.0 L733.8,197.3 L735.2,194.7 L736.6,192.1 L738.1,189.5 L739.6,186.9 L741.2,184.4 L742.7,181.8 L744.3,179.3 L745.9,176.9 L747.5,174.4 L749.2,172.0 L750.9,169.6 L752.6,167.3 L754.4,165.0 L756.2,162.7 L758.0,160.4 L759.8,158.2 L761.8,156.0 L763.7,153.9 L765.7,151.8 L767.7,149.7 L769.8,147.7 L771.9,145.7 L774.0,143.7 L776.2,141.8 L778.5,139.9 L780.8,138.1 L783.1,136.4 L785.5,134.6 L788.0,132.9 L790.5,131.3 L793.0,129.7 L795.7,128.2 L798.3,126.7 L801.0,125.3 L803.8,123.9 L806.7,122.6 L809.6,121.3 L812.5,120.1 L815.6,119.0 L818.7,117.9 L821.8,116.8 L825.0,115.9 L828.3,115.0 L831.7,114.1 L835.1,113.3 L838.6,112.6 L842.2,112.0" fill="none" stroke="#3273d9" stroke-width="1.3"/>
<path d="M487.1,340.0 L487.8,340.0 L488.5,340.0 L489.2,340.0 L489.9,340.0 L490.6,340.0 L491.3,339.9 L492.0,339.9 L492.7,339.9 L493.4,339.8 L494.1,339.8 L494.8,339.8 L495.5,339.7 L496.2,339.7 L496.9,339.6 L497.6,339.5 L498.3,339.5 L498.9,339.4 L499.6,339.3 L500.3,339.2 L501.0,339.2 L501.7,339.1 L502.4,339.0 L503.1,338.9 L503.7,338.8 L504.4,338.7 L505.1,338.6 L505.8,338.4 L506.5,338.3 L507.2,338.2 L507.8,338.1 L508.5,338.0 L509.2,337.8 L509.9,337.7 L510.6,337.6 L511.3,337.4 L511.9,337.3 L512.6,337.2 L513.3,337.0 L514.0,336.9 L514.6,336.7 L515.3,336.6 L516.0,336.4 L516.7,336.2 L517.4,336.1 L518.0,335.9 L518.7,335.8 L519.4,335.6 L520.1,335.4 L520.7,335.3 L521.4,335.1 L522.1,334.9 L522.8,334.7 L523.4,334.6 L524.1,334.4 L524.8,334.2 L525.5,334.0 L526.1,333.8 L526.8,333.7 L527.5,333.5 L528.2,333.3 L528.8,333.1 L529.5,332.9 L530.2,332.7 L530.9,332.5 L531.5,332.3 L532.2,332.2 L532.9,332.0 L533.6,331.8 L534.2,331.6 L534.9,331.4 L535.6,331.2 L536.2,331.0 L536.9,330.8 L537.6,330.6 L538.3,330.4 L538.9,330.3 L539.6,330.1 L540.3,329.9 L541.0,329.7 L541.6,329.5 L542.3,329.3 L543.0,329.1 L543.7,328.9 L544.3,328.8 L545.0,328.6 L545.7,328.4 L546.4,328.2 L547.0,328.0 L547.7,327.8 L548.4,327.7 L549.1,327.5 L549.7,327.3 L550.4,327.1 L551.1,327.0 L551.8,326.8 L552.4,326.6 L553.1,326.5 L553.8,326.3 L554.5,326.1 L555.1,326.0 L555.8,325.8 L556.5,325.7 L557.2,325.5 L557.9,325.4 L558.5,325.2 L559.2,325.1 L559.9,324.9 L560.6,324.8 L561.3,324.7 L561.9,324.5 L562.6,324.4 L563.3,324.3 L564.0,324.1 L564.7,324.0 L565.3,323.9 L566.0,323.8 L566.7,323.7 L567.4,323.6 L568.1,323.5 L568.8,323.4 L569.5,323.3 L570.1,323.2 L570.8,323.1 L571.5,323.0 L572.2,322.9 L572.9,322.8 L573.6,322.8 L574.3,322.7 L575.0,322.6 L575.6,322.6 L576.3,322.5 L577.0,322.5 L577.7,322.4 L578.4,322.4 L579.1,322.3 L579.8,322.3 L580.5,322.3 L581.2,322.3 L581.9,322.3 L582.6,322.2 L583.3,322.2 L584.0,322.2 L584.7,322.2 L585.4,322.3 L586.1,322.3 L586.8,322.3 L587.5,322.3 L588.2,322.4 L588.9,322.4 L589.6,322.4 L590.3,322.5 L591.0,322.6 L591.7,322.6 L592.4,322.7 L593.1,322.8 L593.9,322.9 L594.6,323.0 L595.3,323.1 L596.0,323.2" fill="none" stroke="#3a3a3a" stroke-width="1.3"/></svg>
<svg style="position:absolute;left:460px;top:458px" width="18" height="18" viewBox="460 458 18 18"><circle cx="468.7" cy="466.2" r="6" fill="#f0f0f0"/><circle cx="468.7" cy="466.2" r="5.4" fill="#fff"/><path d="M467.6 463.6 l2.8 2.6 l-2.8 2.6z" fill="#222"/></svg>
<div style="position:absolute;left:42px;top:495.6px;width:858px;height:1px;background:#4d6e86"></div>
<div class="sm" style="left:42.2px;top:516.8px;font-size:5.1px;color:#f0f4f8;font-weight:bold">&copy; EarthDaily Analytics Corp. 2025. Private and Confidential. Subject to Disclaimer on page A.</div>
<svg style="position:absolute;left:845px;top:504px" width="22" height="22" viewBox="0 0 22 22"><circle cx="10" cy="13" r="8" fill="none" stroke="#3f8f96" stroke-width="1.2"/><path d="M6 10 q4 -6 9 -2 q1 5 -3 8 q-5 1 -6 -6z" fill="#3a8a90" opacity="0.8"/><path d="M9 6 q3 -6 7 -2 q2 3 0 7" fill="none" stroke="#4aa0a4" stroke-width="1"/><circle cx="6.3" cy="11.5" r="1.7" fill="#6ad0c8"/></svg>
<div class="sm" style="left:867.2px;top:508.5px;font-size:9.4px;color:#dde3e8;font-weight:bold;letter-spacing:0.2px;line-height:9.6px">EARTH<br>DAILY</div>
</body></html>
